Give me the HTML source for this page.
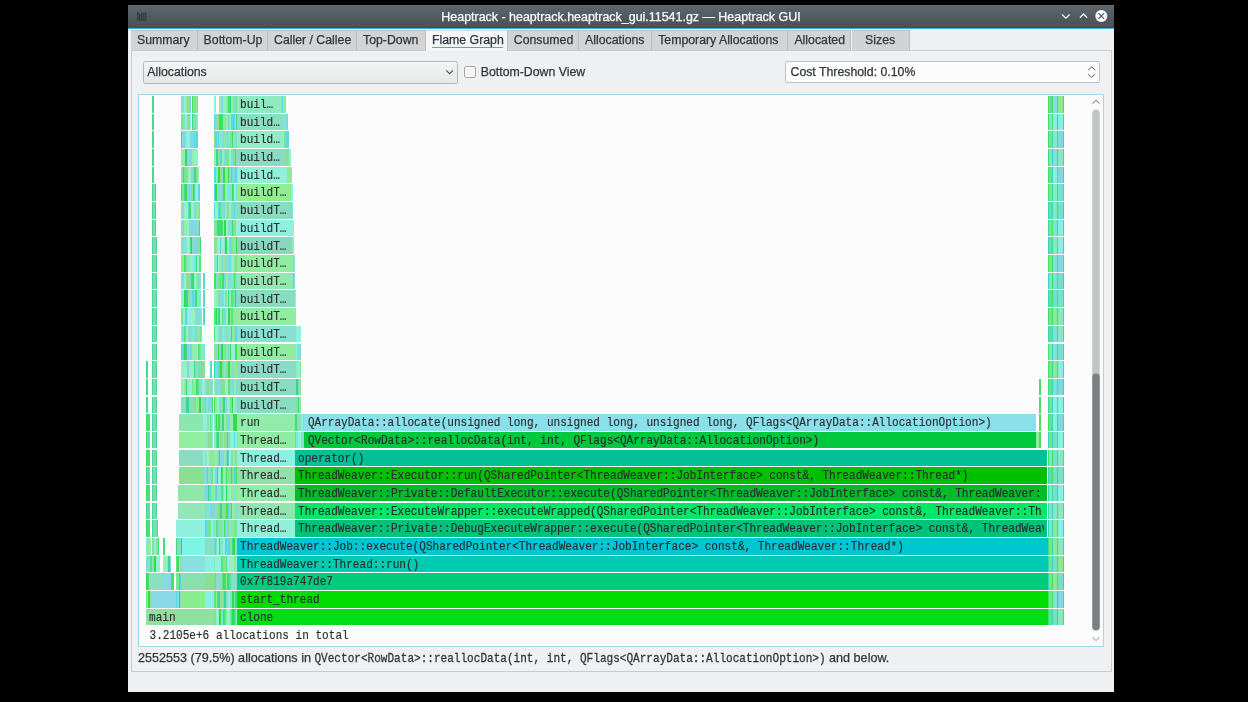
<!DOCTYPE html>
<html><head><meta charset="utf-8">
<style>
*{box-sizing:border-box}
html,body{margin:0;padding:0}
body{width:1248px;height:702px;background:#000;position:relative;overflow:hidden;font-family:"Liberation Sans",sans-serif;font-size:12.3px;color:#31363b;-webkit-text-stroke:0.25px currentColor}
.a{position:absolute}
#win{position:absolute;left:128px;top:5px;width:986.4px;height:687.3px;background:#eff0f1;will-change:transform}
#title{position:absolute;left:0;top:0;width:986px;height:23px;background:linear-gradient(#6a737a 0px,#5c656c 1.5px,#4a5157 21.5px,#404549 23px);color:#fcfcfc;text-align:center;line-height:25px;font-size:12.45px}
#tline{position:absolute;left:0;top:23px;width:986px;height:1px;background:#3daee9}
.tab{position:absolute;top:25px;height:20px;background:#d2d3d4;border-right:1px solid #bcbdbe;border-top:1px solid #c4c5c6;line-height:19px;padding-left:6px;white-space:nowrap;color:#31363b}
#panel{position:absolute;left:3px;top:44.5px;width:981px;height:622px;border:1px solid #c9cacb;background:#eff0f1}
#combo{position:absolute;left:15px;top:56px;width:315px;height:22.5px;border:1px solid #b6b7b8;border-radius:2.5px;background:linear-gradient(#f3f4f4,#e6e7e8);line-height:20px;padding-left:3.3px}
#chk{position:absolute;left:335.8px;top:61px;width:12.2px;height:11.8px;border:1px solid #a8a9aa;border-radius:2px;background:#f4f4f5}
#spin{position:absolute;left:657px;top:56px;width:314.6px;height:22.4px;border:1px solid #c0c1c2;border-radius:2px;background:#fcfcfc;line-height:20px;padding-left:4.5px}
#view{position:absolute;left:10.2px;top:88.8px;width:966.3px;height:553.2px;border:1px solid #a6d4ec;background:#fcfcfc;overflow:hidden}
#fg{position:absolute;left:0;top:0;width:1248px;height:702px;overflow:hidden;will-change:transform}
#fg div{position:absolute}
#fg .blk{overflow:hidden;white-space:pre}
.m,#fg .blk span{font-family:"Liberation Mono",monospace;font-size:11.07px;color:#2a2e32;white-space:pre;transform:scaleY(1.1);transform-origin:0 12px;-webkit-text-stroke:0.15px #2a2e32}
.m{position:absolute;line-height:16.5px;margin-top:1.1px}
#fg .blk span{position:absolute;left:3px;top:1.1px;line-height:16.5px}
</style></head><body>
<div id="win">
  <div id="title">Heaptrack - heaptrack.heaptrack_gui.11541.gz — Heaptrack GUI</div>
  <div id="tline"></div>
  <div class="tab" style="left:3px;width:66.6px">Summary</div>
  <div class="tab" style="left:69.6px;width:70.4px">Bottom-Up</div>
  <div class="tab" style="left:140px;width:89px">Caller / Callee</div>
  <div class="tab" style="left:229px;width:68.6px">Top-Down</div>
  <div class="tab" style="left:379.8px;width:71.2px">Consumed</div>
  <div class="tab" style="left:451px;width:73.2px">Allocations</div>
  <div class="tab" style="left:524.2px;width:136.2px">Temporary Allocations</div>
  <div class="tab" style="left:660.4px;width:63.1px">Allocated</div>
  <div class="tab" style="left:723.5px;width:58.3px;text-align:center;padding-left:0">Sizes</div>
  <div id="panel"></div>
  <div class="tab" style="left:298px;width:81.8px;background:#f5f5f5;border-top:1px solid #d8d9da;height:21px">Flame Graph</div>
  <div class="a" style="left:303.5px;top:42px;width:71.5px;height:1.3px;background:#3daee9"></div>
  <div id="combo">Allocations</div>
  <div id="chk"></div>
  <div class="a" style="left:352.8px;top:58.5px;line-height:16px">Bottom-Down View</div>
  <div id="spin">Cost Threshold: 0.10%</div>
  <div id="view"></div>
  <div class="a" style="left:10px;top:645px;line-height:16px;font-size:12.6px;white-space:pre">2552553 (79.5%) allocations in <span style="font-family:'Liberation Mono',monospace;font-size:11.07px;display:inline-block;transform:scaleY(1.1);transform-origin:0 12px">QVector&lt;RowData&gt;::reallocData(int, int, QFlags&lt;QArrayData::AllocationOption&gt;)</span> and below.</div>
</div>
<div id="fg">
<div style="left:152.00px;top:96.00px;width:2.00px;height:16.50px;background:#78dcb0;box-shadow:inset 1px 0 #48d890,inset -1px 0 #48d890;"></div>
<div style="left:181.00px;top:96.00px;width:3.00px;height:16.50px;background:#86dcd0;"></div>
<div style="left:184.00px;top:96.00px;width:2.00px;height:16.50px;background:#8ff0e0;"></div>
<div style="left:186.00px;top:96.00px;width:2.00px;height:16.50px;background:#8fe99b;"></div>
<div style="left:188.00px;top:96.00px;width:2.00px;height:16.50px;background:#88e090;"></div>
<div style="left:190.00px;top:96.00px;width:2.00px;height:16.50px;background:#80d8e4;"></div>
<div style="left:192.00px;top:96.00px;width:1.00px;height:16.50px;background:#40e060;"></div>
<div style="left:193.00px;top:96.00px;width:5.00px;height:16.50px;background:#88e090;"></div>
<div style="left:214.00px;top:96.00px;width:3.00px;height:16.50px;background:#8ff0e0;"></div>
<div style="left:217.00px;top:96.00px;width:1.00px;height:16.50px;background:#40e060;"></div>
<div style="left:218.00px;top:96.00px;width:1.00px;height:16.50px;background:#90eeb0;"></div>
<div style="left:219.00px;top:96.00px;width:2.00px;height:16.50px;background:#90eeb0;"></div>
<div style="left:221.00px;top:96.00px;width:2.00px;height:16.50px;background:#80d8e4;"></div>
<div style="left:223.00px;top:96.00px;width:2.00px;height:16.50px;background:#98f0c8;"></div>
<div style="left:225.00px;top:96.00px;width:1.00px;height:16.50px;background:#98f0c8;"></div>
<div style="left:226.00px;top:96.00px;width:2.00px;height:16.50px;background:#8fe99b;"></div>
<div style="left:228.00px;top:96.00px;width:1.00px;height:16.50px;background:#40e060;"></div>
<div style="left:229.00px;top:96.00px;width:2.00px;height:16.50px;background:#38d890;"></div>
<div style="left:231.00px;top:96.00px;width:2.00px;height:16.50px;background:#90eeb0;"></div>
<div style="left:233.00px;top:96.00px;width:2.00px;height:16.50px;background:#86dcd0;"></div>
<div style="left:235.00px;top:96.00px;width:2.00px;height:16.50px;background:#70ea90;"></div>
<div style="left:237.00px;top:96.00px;width:45.00px;height:16.50px;background:#8ee8c0;"></div>
<div style="left:282.00px;top:96.00px;width:1.00px;height:16.50px;background:#58d8e0;"></div>
<div style="left:283.00px;top:96.00px;width:1.00px;height:16.50px;background:#98f0c8;"></div>
<div style="left:284.00px;top:96.00px;width:2.00px;height:16.50px;background:#8fe99b;"></div>
<div style="left:191.00px;top:96.00px;width:1.00px;height:16.50px;background:#fcfcfc;"></div>
<div style="left:216.00px;top:96.00px;width:3.00px;height:16.50px;background:#fcfcfc;"></div>
<span class="m" style="left:240.00px;top:96.00px">buil…</span>
<div style="left:152.00px;top:113.68px;width:2.00px;height:16.50px;background:#78dcb0;box-shadow:inset 1px 0 #48d890,inset -1px 0 #48d890;"></div>
<div style="left:181.00px;top:113.68px;width:2.00px;height:16.50px;background:#70ea90;"></div>
<div style="left:183.00px;top:113.68px;width:2.00px;height:16.50px;background:#88dfc0;"></div>
<div style="left:185.00px;top:113.68px;width:2.00px;height:16.50px;background:#8ff0e0;"></div>
<div style="left:187.00px;top:113.68px;width:3.00px;height:16.50px;background:#88e090;"></div>
<div style="left:190.00px;top:113.68px;width:1.00px;height:16.50px;background:#8ff0e0;"></div>
<div style="left:191.00px;top:113.68px;width:2.00px;height:16.50px;background:#38d890;"></div>
<div style="left:193.00px;top:113.68px;width:3.00px;height:16.50px;background:#88e090;"></div>
<div style="left:196.00px;top:113.68px;width:1.00px;height:16.50px;background:#80e8d0;"></div>
<div style="left:197.00px;top:113.68px;width:1.00px;height:16.50px;background:#90eeb0;"></div>
<div style="left:214.00px;top:113.68px;width:1.00px;height:16.50px;background:#58d8e0;"></div>
<div style="left:215.00px;top:113.68px;width:2.00px;height:16.50px;background:#88dfc0;"></div>
<div style="left:217.00px;top:113.68px;width:2.00px;height:16.50px;background:#88e090;"></div>
<div style="left:219.00px;top:113.68px;width:1.00px;height:16.50px;background:#38d890;"></div>
<div style="left:220.00px;top:113.68px;width:2.00px;height:16.50px;background:#40e060;"></div>
<div style="left:222.00px;top:113.68px;width:1.00px;height:16.50px;background:#40e060;"></div>
<div style="left:223.00px;top:113.68px;width:3.00px;height:16.50px;background:#8fe99b;"></div>
<div style="left:226.00px;top:113.68px;width:2.00px;height:16.50px;background:#90eeb0;"></div>
<div style="left:228.00px;top:113.68px;width:2.00px;height:16.50px;background:#86dcd0;"></div>
<div style="left:230.00px;top:113.68px;width:1.00px;height:16.50px;background:#98f0c8;"></div>
<div style="left:231.00px;top:113.68px;width:2.00px;height:16.50px;background:#58d8e0;"></div>
<div style="left:233.00px;top:113.68px;width:1.00px;height:16.50px;background:#50e878;"></div>
<div style="left:234.00px;top:113.68px;width:1.00px;height:16.50px;background:#58d8e0;"></div>
<div style="left:235.00px;top:113.68px;width:1.00px;height:16.50px;background:#90eeb0;"></div>
<div style="left:236.00px;top:113.68px;width:1.00px;height:16.50px;background:#38d890;"></div>
<div style="left:237.00px;top:113.68px;width:46.00px;height:16.50px;background:#88e0c0;"></div>
<div style="left:283.00px;top:113.68px;width:3.00px;height:16.50px;background:#80e8d0;"></div>
<div style="left:286.00px;top:113.68px;width:2.00px;height:16.50px;background:#80d8e4;"></div>
<div style="left:191.00px;top:113.68px;width:1.00px;height:16.50px;background:#fcfcfc;"></div>
<span class="m" style="left:240.00px;top:113.68px">build…</span>
<div style="left:152.00px;top:131.36px;width:2.00px;height:16.50px;background:#78dcb0;box-shadow:inset 1px 0 #48d890,inset -1px 0 #48d890;"></div>
<div style="left:181.00px;top:131.36px;width:1.00px;height:16.50px;background:#40e060;"></div>
<div style="left:182.00px;top:131.36px;width:4.00px;height:16.50px;background:#80d8e4;"></div>
<div style="left:186.00px;top:131.36px;width:4.00px;height:16.50px;background:#8ff0e0;"></div>
<div style="left:190.00px;top:131.36px;width:4.00px;height:16.50px;background:#80d8e4;"></div>
<div style="left:194.00px;top:131.36px;width:1.00px;height:16.50px;background:#58d8e0;"></div>
<div style="left:195.00px;top:131.36px;width:1.00px;height:16.50px;background:#70ea90;"></div>
<div style="left:196.00px;top:131.36px;width:2.00px;height:16.50px;background:#58d8e0;"></div>
<div style="left:214.00px;top:131.36px;width:1.00px;height:16.50px;background:#88e090;"></div>
<div style="left:215.00px;top:131.36px;width:2.00px;height:16.50px;background:#58d8e0;"></div>
<div style="left:217.00px;top:131.36px;width:1.00px;height:16.50px;background:#86dcd0;"></div>
<div style="left:218.00px;top:131.36px;width:1.00px;height:16.50px;background:#58d8e0;"></div>
<div style="left:219.00px;top:131.36px;width:2.00px;height:16.50px;background:#80e8d0;"></div>
<div style="left:221.00px;top:131.36px;width:1.00px;height:16.50px;background:#90eeb0;"></div>
<div style="left:222.00px;top:131.36px;width:2.00px;height:16.50px;background:#86dcd0;"></div>
<div style="left:224.00px;top:131.36px;width:2.00px;height:16.50px;background:#8fe99b;"></div>
<div style="left:226.00px;top:131.36px;width:1.00px;height:16.50px;background:#80e8d0;"></div>
<div style="left:227.00px;top:131.36px;width:1.00px;height:16.50px;background:#70ea90;"></div>
<div style="left:228.00px;top:131.36px;width:2.00px;height:16.50px;background:#80e8d0;"></div>
<div style="left:230.00px;top:131.36px;width:2.00px;height:16.50px;background:#88e090;"></div>
<div style="left:232.00px;top:131.36px;width:1.00px;height:16.50px;background:#40e060;"></div>
<div style="left:233.00px;top:131.36px;width:2.00px;height:16.50px;background:#80e8d0;"></div>
<div style="left:235.00px;top:131.36px;width:2.00px;height:16.50px;background:#88dfc0;"></div>
<div style="left:237.00px;top:131.36px;width:47.00px;height:16.50px;background:#90ecc8;"></div>
<div style="left:284.00px;top:131.36px;width:2.00px;height:16.50px;background:#70ea90;"></div>
<div style="left:286.00px;top:131.36px;width:1.00px;height:16.50px;background:#58d8e0;"></div>
<div style="left:287.00px;top:131.36px;width:2.00px;height:16.50px;background:#58d8e0;"></div>
<span class="m" style="left:240.00px;top:131.36px">build…</span>
<div style="left:152.00px;top:149.04px;width:2.00px;height:16.50px;background:#78dcb0;box-shadow:inset 1px 0 #48d890,inset -1px 0 #48d890;"></div>
<div style="left:181.00px;top:149.04px;width:3.00px;height:16.50px;background:#90eeb0;"></div>
<div style="left:184.00px;top:149.04px;width:1.00px;height:16.50px;background:#90eeb0;"></div>
<div style="left:185.00px;top:149.04px;width:2.00px;height:16.50px;background:#30dd48;"></div>
<div style="left:187.00px;top:149.04px;width:1.00px;height:16.50px;background:#86dcd0;"></div>
<div style="left:188.00px;top:149.04px;width:4.00px;height:16.50px;background:#80d8e4;"></div>
<div style="left:192.00px;top:149.04px;width:2.00px;height:16.50px;background:#90eeb0;"></div>
<div style="left:194.00px;top:149.04px;width:4.00px;height:16.50px;background:#98f0c8;"></div>
<div style="left:214.00px;top:149.04px;width:2.00px;height:16.50px;background:#90eeb0;"></div>
<div style="left:216.00px;top:149.04px;width:2.00px;height:16.50px;background:#38d890;"></div>
<div style="left:218.00px;top:149.04px;width:2.00px;height:16.50px;background:#88e090;"></div>
<div style="left:220.00px;top:149.04px;width:2.00px;height:16.50px;background:#58d8e0;"></div>
<div style="left:222.00px;top:149.04px;width:2.00px;height:16.50px;background:#90eeb0;"></div>
<div style="left:224.00px;top:149.04px;width:2.00px;height:16.50px;background:#80d8e4;"></div>
<div style="left:226.00px;top:149.04px;width:1.00px;height:16.50px;background:#70ea90;"></div>
<div style="left:227.00px;top:149.04px;width:2.00px;height:16.50px;background:#70ea90;"></div>
<div style="left:229.00px;top:149.04px;width:2.00px;height:16.50px;background:#8ff0e0;"></div>
<div style="left:231.00px;top:149.04px;width:2.00px;height:16.50px;background:#86dcd0;"></div>
<div style="left:233.00px;top:149.04px;width:2.00px;height:16.50px;background:#70ea90;"></div>
<div style="left:235.00px;top:149.04px;width:1.00px;height:16.50px;background:#40e060;"></div>
<div style="left:236.00px;top:149.04px;width:1.00px;height:16.50px;background:#88dfc0;"></div>
<div style="left:237.00px;top:149.04px;width:49.00px;height:16.50px;background:#88dcc0;"></div>
<div style="left:286.00px;top:149.04px;width:3.00px;height:16.50px;background:#88e090;"></div>
<div style="left:289.00px;top:149.04px;width:2.00px;height:16.50px;background:#8ff0e0;"></div>
<span class="m" style="left:240.00px;top:149.04px">build…</span>
<div style="left:152.00px;top:166.72px;width:2.00px;height:16.50px;background:#78dcb0;box-shadow:inset 1px 0 #48d890,inset -1px 0 #48d890;"></div>
<div style="left:181.00px;top:166.72px;width:2.00px;height:16.50px;background:#88dfc0;"></div>
<div style="left:183.00px;top:166.72px;width:1.00px;height:16.50px;background:#40e060;"></div>
<div style="left:184.00px;top:166.72px;width:2.00px;height:16.50px;background:#70ea90;"></div>
<div style="left:186.00px;top:166.72px;width:2.00px;height:16.50px;background:#88e090;"></div>
<div style="left:188.00px;top:166.72px;width:3.00px;height:16.50px;background:#98f0c8;"></div>
<div style="left:191.00px;top:166.72px;width:3.00px;height:16.50px;background:#80d8e4;"></div>
<div style="left:194.00px;top:166.72px;width:2.00px;height:16.50px;background:#40e060;"></div>
<div style="left:196.00px;top:166.72px;width:2.00px;height:16.50px;background:#88e090;"></div>
<div style="left:198.00px;top:166.72px;width:1.00px;height:16.50px;background:#98f0c8;"></div>
<div style="left:214.00px;top:166.72px;width:2.00px;height:16.50px;background:#58d8e0;"></div>
<div style="left:216.00px;top:166.72px;width:2.00px;height:16.50px;background:#80e8d0;"></div>
<div style="left:218.00px;top:166.72px;width:2.00px;height:16.50px;background:#30dd48;"></div>
<div style="left:220.00px;top:166.72px;width:2.00px;height:16.50px;background:#88e090;"></div>
<div style="left:222.00px;top:166.72px;width:1.00px;height:16.50px;background:#86dcd0;"></div>
<div style="left:223.00px;top:166.72px;width:2.00px;height:16.50px;background:#30dd48;"></div>
<div style="left:225.00px;top:166.72px;width:3.00px;height:16.50px;background:#8fe99b;"></div>
<div style="left:228.00px;top:166.72px;width:1.00px;height:16.50px;background:#30dd48;"></div>
<div style="left:229.00px;top:166.72px;width:2.00px;height:16.50px;background:#86dcd0;"></div>
<div style="left:231.00px;top:166.72px;width:1.00px;height:16.50px;background:#50e878;"></div>
<div style="left:232.00px;top:166.72px;width:3.00px;height:16.50px;background:#80d8e4;"></div>
<div style="left:235.00px;top:166.72px;width:1.00px;height:16.50px;background:#58d8e0;"></div>
<div style="left:236.00px;top:166.72px;width:1.00px;height:16.50px;background:#58d8e0;"></div>
<div style="left:237.00px;top:166.72px;width:50.00px;height:16.50px;background:#90f0d8;"></div>
<div style="left:287.00px;top:166.72px;width:2.00px;height:16.50px;background:#8fe99b;"></div>
<div style="left:289.00px;top:166.72px;width:3.00px;height:16.50px;background:#8fe99b;"></div>
<span class="m" style="left:240.00px;top:166.72px">build…</span>
<div style="left:152.00px;top:184.40px;width:4.00px;height:16.50px;background:#78dcb0;box-shadow:inset 1px 0 #48d890,inset -1px 0 #48d890;"></div>
<div style="left:181.00px;top:184.40px;width:1.00px;height:16.50px;background:#38d890;"></div>
<div style="left:182.00px;top:184.40px;width:2.00px;height:16.50px;background:#88e090;"></div>
<div style="left:184.00px;top:184.40px;width:2.00px;height:16.50px;background:#38d890;"></div>
<div style="left:186.00px;top:184.40px;width:1.00px;height:16.50px;background:#30dd48;"></div>
<div style="left:187.00px;top:184.40px;width:4.00px;height:16.50px;background:#80d8e4;"></div>
<div style="left:191.00px;top:184.40px;width:2.00px;height:16.50px;background:#88e090;"></div>
<div style="left:193.00px;top:184.40px;width:1.00px;height:16.50px;background:#38d890;"></div>
<div style="left:194.00px;top:184.40px;width:1.00px;height:16.50px;background:#38d890;"></div>
<div style="left:195.00px;top:184.40px;width:3.00px;height:16.50px;background:#8ff0e0;"></div>
<div style="left:198.00px;top:184.40px;width:2.00px;height:16.50px;background:#58d8e0;"></div>
<div style="left:214.00px;top:184.40px;width:1.00px;height:16.50px;background:#58d8e0;"></div>
<div style="left:215.00px;top:184.40px;width:2.00px;height:16.50px;background:#30dd48;"></div>
<div style="left:217.00px;top:184.40px;width:1.00px;height:16.50px;background:#88dfc0;"></div>
<div style="left:218.00px;top:184.40px;width:3.00px;height:16.50px;background:#86dcd0;"></div>
<div style="left:221.00px;top:184.40px;width:2.00px;height:16.50px;background:#80d8e4;"></div>
<div style="left:223.00px;top:184.40px;width:2.00px;height:16.50px;background:#40e060;"></div>
<div style="left:225.00px;top:184.40px;width:2.00px;height:16.50px;background:#90eeb0;"></div>
<div style="left:227.00px;top:184.40px;width:3.00px;height:16.50px;background:#80e8d0;"></div>
<div style="left:230.00px;top:184.40px;width:2.00px;height:16.50px;background:#86dcd0;"></div>
<div style="left:232.00px;top:184.40px;width:2.00px;height:16.50px;background:#40e060;"></div>
<div style="left:234.00px;top:184.40px;width:2.00px;height:16.50px;background:#8ff0e0;"></div>
<div style="left:236.00px;top:184.40px;width:1.00px;height:16.50px;background:#86dcd0;"></div>
<div style="left:237.00px;top:184.40px;width:54.00px;height:16.50px;background:#90ee90;"></div>
<div style="left:291.00px;top:184.40px;width:2.00px;height:16.50px;background:#8ff0e0;"></div>
<span class="m" style="left:240.00px;top:184.40px">buildT…</span>
<div style="left:152.00px;top:202.08px;width:4.00px;height:16.50px;background:#78dcb0;box-shadow:inset 1px 0 #48d890,inset -1px 0 #48d890;"></div>
<div style="left:181.00px;top:202.08px;width:3.00px;height:16.50px;background:#88dfc0;"></div>
<div style="left:184.00px;top:202.08px;width:4.00px;height:16.50px;background:#98f0c8;"></div>
<div style="left:188.00px;top:202.08px;width:1.00px;height:16.50px;background:#58d8e0;"></div>
<div style="left:189.00px;top:202.08px;width:2.00px;height:16.50px;background:#40e060;"></div>
<div style="left:191.00px;top:202.08px;width:3.00px;height:16.50px;background:#98f0c8;"></div>
<div style="left:194.00px;top:202.08px;width:2.00px;height:16.50px;background:#80d8e4;"></div>
<div style="left:196.00px;top:202.08px;width:3.00px;height:16.50px;background:#8fe99b;"></div>
<div style="left:199.00px;top:202.08px;width:1.00px;height:16.50px;background:#70ea90;"></div>
<div style="left:214.00px;top:202.08px;width:1.00px;height:16.50px;background:#58d8e0;"></div>
<div style="left:215.00px;top:202.08px;width:3.00px;height:16.50px;background:#98f0c8;"></div>
<div style="left:218.00px;top:202.08px;width:1.00px;height:16.50px;background:#58d8e0;"></div>
<div style="left:219.00px;top:202.08px;width:2.00px;height:16.50px;background:#50e878;"></div>
<div style="left:221.00px;top:202.08px;width:1.00px;height:16.50px;background:#80d8e4;"></div>
<div style="left:222.00px;top:202.08px;width:3.00px;height:16.50px;background:#80d8e4;"></div>
<div style="left:225.00px;top:202.08px;width:2.00px;height:16.50px;background:#90eeb0;"></div>
<div style="left:227.00px;top:202.08px;width:2.00px;height:16.50px;background:#88e090;"></div>
<div style="left:229.00px;top:202.08px;width:2.00px;height:16.50px;background:#98f0c8;"></div>
<div style="left:231.00px;top:202.08px;width:2.00px;height:16.50px;background:#86dcd0;"></div>
<div style="left:233.00px;top:202.08px;width:1.00px;height:16.50px;background:#88dfc0;"></div>
<div style="left:234.00px;top:202.08px;width:1.00px;height:16.50px;background:#58d8e0;"></div>
<div style="left:235.00px;top:202.08px;width:2.00px;height:16.50px;background:#88dfc0;"></div>
<div style="left:237.00px;top:202.08px;width:54.00px;height:16.50px;background:#88dcc0;"></div>
<div style="left:291.00px;top:202.08px;width:2.00px;height:16.50px;background:#86dcd0;"></div>
<span class="m" style="left:240.00px;top:202.08px">buildT…</span>
<div style="left:152.00px;top:219.76px;width:4.00px;height:16.50px;background:#78dcb0;box-shadow:inset 1px 0 #48d890,inset -1px 0 #48d890;"></div>
<div style="left:181.00px;top:219.76px;width:2.00px;height:16.50px;background:#86dcd0;"></div>
<div style="left:183.00px;top:219.76px;width:1.00px;height:16.50px;background:#70ea90;"></div>
<div style="left:184.00px;top:219.76px;width:3.00px;height:16.50px;background:#90eeb0;"></div>
<div style="left:187.00px;top:219.76px;width:2.00px;height:16.50px;background:#98f0c8;"></div>
<div style="left:189.00px;top:219.76px;width:3.00px;height:16.50px;background:#80d8e4;"></div>
<div style="left:192.00px;top:219.76px;width:4.00px;height:16.50px;background:#80d8e4;"></div>
<div style="left:196.00px;top:219.76px;width:2.00px;height:16.50px;background:#88dfc0;"></div>
<div style="left:198.00px;top:219.76px;width:1.00px;height:16.50px;background:#86dcd0;"></div>
<div style="left:199.00px;top:219.76px;width:1.00px;height:16.50px;background:#38d890;"></div>
<div style="left:214.00px;top:219.76px;width:2.00px;height:16.50px;background:#88e090;"></div>
<div style="left:216.00px;top:219.76px;width:1.00px;height:16.50px;background:#70ea90;"></div>
<div style="left:217.00px;top:219.76px;width:1.00px;height:16.50px;background:#40e060;"></div>
<div style="left:218.00px;top:219.76px;width:1.00px;height:16.50px;background:#38d890;"></div>
<div style="left:219.00px;top:219.76px;width:2.00px;height:16.50px;background:#40e060;"></div>
<div style="left:221.00px;top:219.76px;width:2.00px;height:16.50px;background:#40e060;"></div>
<div style="left:223.00px;top:219.76px;width:1.00px;height:16.50px;background:#90eeb0;"></div>
<div style="left:224.00px;top:219.76px;width:2.00px;height:16.50px;background:#30dd48;"></div>
<div style="left:226.00px;top:219.76px;width:2.00px;height:16.50px;background:#98f0c8;"></div>
<div style="left:228.00px;top:219.76px;width:2.00px;height:16.50px;background:#86dcd0;"></div>
<div style="left:230.00px;top:219.76px;width:2.00px;height:16.50px;background:#88dfc0;"></div>
<div style="left:232.00px;top:219.76px;width:1.00px;height:16.50px;background:#38d890;"></div>
<div style="left:233.00px;top:219.76px;width:2.00px;height:16.50px;background:#88e090;"></div>
<div style="left:235.00px;top:219.76px;width:1.00px;height:16.50px;background:#88e090;"></div>
<div style="left:236.00px;top:219.76px;width:1.00px;height:16.50px;background:#98f0c8;"></div>
<div style="left:237.00px;top:219.76px;width:55.00px;height:16.50px;background:#90f0e0;"></div>
<div style="left:292.00px;top:219.76px;width:2.00px;height:16.50px;background:#98f0c8;"></div>
<span class="m" style="left:240.00px;top:219.76px">buildT…</span>
<div style="left:152.00px;top:237.44px;width:5.00px;height:16.50px;background:#78dcb0;box-shadow:inset 1px 0 #48d890,inset -1px 0 #48d890;"></div>
<div style="left:181.00px;top:237.44px;width:3.00px;height:16.50px;background:#88dfc0;"></div>
<div style="left:184.00px;top:237.44px;width:3.00px;height:16.50px;background:#80e8d0;"></div>
<div style="left:187.00px;top:237.44px;width:3.00px;height:16.50px;background:#8ff0e0;"></div>
<div style="left:190.00px;top:237.44px;width:1.00px;height:16.50px;background:#40e060;"></div>
<div style="left:191.00px;top:237.44px;width:1.00px;height:16.50px;background:#30dd48;"></div>
<div style="left:192.00px;top:237.44px;width:2.00px;height:16.50px;background:#88dfc0;"></div>
<div style="left:194.00px;top:237.44px;width:4.00px;height:16.50px;background:#80d8e4;"></div>
<div style="left:198.00px;top:237.44px;width:2.00px;height:16.50px;background:#88e090;"></div>
<div style="left:200.00px;top:237.44px;width:1.00px;height:16.50px;background:#38d890;"></div>
<div style="left:214.00px;top:237.44px;width:3.00px;height:16.50px;background:#88e090;"></div>
<div style="left:217.00px;top:237.44px;width:3.00px;height:16.50px;background:#98f0c8;"></div>
<div style="left:220.00px;top:237.44px;width:1.00px;height:16.50px;background:#58d8e0;"></div>
<div style="left:221.00px;top:237.44px;width:3.00px;height:16.50px;background:#98f0c8;"></div>
<div style="left:224.00px;top:237.44px;width:1.00px;height:16.50px;background:#80e8d0;"></div>
<div style="left:225.00px;top:237.44px;width:2.00px;height:16.50px;background:#30dd48;"></div>
<div style="left:227.00px;top:237.44px;width:2.00px;height:16.50px;background:#98f0c8;"></div>
<div style="left:229.00px;top:237.44px;width:1.00px;height:16.50px;background:#80d8e4;"></div>
<div style="left:230.00px;top:237.44px;width:1.00px;height:16.50px;background:#58d8e0;"></div>
<div style="left:231.00px;top:237.44px;width:2.00px;height:16.50px;background:#88e090;"></div>
<div style="left:233.00px;top:237.44px;width:3.00px;height:16.50px;background:#8fe99b;"></div>
<div style="left:236.00px;top:237.44px;width:1.00px;height:16.50px;background:#30dd48;"></div>
<div style="left:237.00px;top:237.44px;width:55.00px;height:16.50px;background:#88d8c0;"></div>
<div style="left:292.00px;top:237.44px;width:2.00px;height:16.50px;background:#90eeb0;"></div>
<span class="m" style="left:240.00px;top:237.44px">buildT…</span>
<div style="left:152.00px;top:255.12px;width:5.00px;height:16.50px;background:#78dcb0;box-shadow:inset 1px 0 #48d890,inset -1px 0 #48d890;"></div>
<div style="left:181.00px;top:255.12px;width:3.00px;height:16.50px;background:#8fe99b;"></div>
<div style="left:184.00px;top:255.12px;width:1.00px;height:16.50px;background:#40e060;"></div>
<div style="left:185.00px;top:255.12px;width:1.00px;height:16.50px;background:#50e878;"></div>
<div style="left:186.00px;top:255.12px;width:1.00px;height:16.50px;background:#88e090;"></div>
<div style="left:187.00px;top:255.12px;width:2.00px;height:16.50px;background:#80e8d0;"></div>
<div style="left:189.00px;top:255.12px;width:2.00px;height:16.50px;background:#90eeb0;"></div>
<div style="left:191.00px;top:255.12px;width:2.00px;height:16.50px;background:#8ff0e0;"></div>
<div style="left:193.00px;top:255.12px;width:3.00px;height:16.50px;background:#80e8d0;"></div>
<div style="left:196.00px;top:255.12px;width:1.00px;height:16.50px;background:#38d890;"></div>
<div style="left:197.00px;top:255.12px;width:2.00px;height:16.50px;background:#98f0c8;"></div>
<div style="left:199.00px;top:255.12px;width:1.00px;height:16.50px;background:#50e878;"></div>
<div style="left:200.00px;top:255.12px;width:1.00px;height:16.50px;background:#50e878;"></div>
<div style="left:214.00px;top:255.12px;width:1.00px;height:16.50px;background:#90eeb0;"></div>
<div style="left:215.00px;top:255.12px;width:2.00px;height:16.50px;background:#80e8d0;"></div>
<div style="left:217.00px;top:255.12px;width:1.00px;height:16.50px;background:#40e060;"></div>
<div style="left:218.00px;top:255.12px;width:2.00px;height:16.50px;background:#98f0c8;"></div>
<div style="left:220.00px;top:255.12px;width:2.00px;height:16.50px;background:#8fe99b;"></div>
<div style="left:222.00px;top:255.12px;width:1.00px;height:16.50px;background:#80d8e4;"></div>
<div style="left:223.00px;top:255.12px;width:2.00px;height:16.50px;background:#8fe99b;"></div>
<div style="left:225.00px;top:255.12px;width:3.00px;height:16.50px;background:#86dcd0;"></div>
<div style="left:228.00px;top:255.12px;width:2.00px;height:16.50px;background:#80d8e4;"></div>
<div style="left:230.00px;top:255.12px;width:1.00px;height:16.50px;background:#58d8e0;"></div>
<div style="left:231.00px;top:255.12px;width:3.00px;height:16.50px;background:#98f0c8;"></div>
<div style="left:234.00px;top:255.12px;width:3.00px;height:16.50px;background:#88e090;"></div>
<div style="left:237.00px;top:255.12px;width:56.00px;height:16.50px;background:#90eca0;"></div>
<div style="left:293.00px;top:255.12px;width:2.00px;height:16.50px;background:#86dcd0;"></div>
<span class="m" style="left:240.00px;top:255.12px">buildT…</span>
<div style="left:152.00px;top:272.80px;width:5.00px;height:16.50px;background:#78dcb0;box-shadow:inset 1px 0 #48d890,inset -1px 0 #48d890;"></div>
<div style="left:181.00px;top:272.80px;width:3.00px;height:16.50px;background:#86dcd0;"></div>
<div style="left:184.00px;top:272.80px;width:2.00px;height:16.50px;background:#8ff0e0;"></div>
<div style="left:186.00px;top:272.80px;width:4.00px;height:16.50px;background:#88e090;"></div>
<div style="left:190.00px;top:272.80px;width:1.00px;height:16.50px;background:#86dcd0;"></div>
<div style="left:191.00px;top:272.80px;width:2.00px;height:16.50px;background:#40e060;"></div>
<div style="left:193.00px;top:272.80px;width:1.00px;height:16.50px;background:#30dd48;"></div>
<div style="left:194.00px;top:272.80px;width:2.00px;height:16.50px;background:#8ff0e0;"></div>
<div style="left:196.00px;top:272.80px;width:1.00px;height:16.50px;background:#90eeb0;"></div>
<div style="left:197.00px;top:272.80px;width:4.00px;height:16.50px;background:#88dfc0;"></div>
<div style="left:203.00px;top:272.80px;width:2.00px;height:16.50px;background:#5ad8c8;"></div>
<div style="left:214.00px;top:272.80px;width:2.00px;height:16.50px;background:#40e060;"></div>
<div style="left:216.00px;top:272.80px;width:2.00px;height:16.50px;background:#88dfc0;"></div>
<div style="left:218.00px;top:272.80px;width:2.00px;height:16.50px;background:#70ea90;"></div>
<div style="left:220.00px;top:272.80px;width:1.00px;height:16.50px;background:#50e878;"></div>
<div style="left:221.00px;top:272.80px;width:1.00px;height:16.50px;background:#86dcd0;"></div>
<div style="left:222.00px;top:272.80px;width:2.00px;height:16.50px;background:#40e060;"></div>
<div style="left:224.00px;top:272.80px;width:2.00px;height:16.50px;background:#80d8e4;"></div>
<div style="left:226.00px;top:272.80px;width:2.00px;height:16.50px;background:#90eeb0;"></div>
<div style="left:228.00px;top:272.80px;width:3.00px;height:16.50px;background:#86dcd0;"></div>
<div style="left:231.00px;top:272.80px;width:2.00px;height:16.50px;background:#80e8d0;"></div>
<div style="left:233.00px;top:272.80px;width:1.00px;height:16.50px;background:#88dfc0;"></div>
<div style="left:234.00px;top:272.80px;width:1.00px;height:16.50px;background:#40e060;"></div>
<div style="left:235.00px;top:272.80px;width:2.00px;height:16.50px;background:#80d8e4;"></div>
<div style="left:237.00px;top:272.80px;width:56.00px;height:16.50px;background:#90eab0;"></div>
<div style="left:293.00px;top:272.80px;width:1.00px;height:16.50px;background:#58d8e0;"></div>
<div style="left:294.00px;top:272.80px;width:1.00px;height:16.50px;background:#80d8e4;"></div>
<span class="m" style="left:240.00px;top:272.80px">buildT…</span>
<div style="left:152.00px;top:290.48px;width:5.00px;height:16.50px;background:#78dcb0;box-shadow:inset 1px 0 #48d890,inset -1px 0 #48d890;"></div>
<div style="left:181.00px;top:290.48px;width:3.00px;height:16.50px;background:#8ff0e0;"></div>
<div style="left:184.00px;top:290.48px;width:2.00px;height:16.50px;background:#30dd48;"></div>
<div style="left:186.00px;top:290.48px;width:2.00px;height:16.50px;background:#38d890;"></div>
<div style="left:188.00px;top:290.48px;width:1.00px;height:16.50px;background:#88e090;"></div>
<div style="left:189.00px;top:290.48px;width:3.00px;height:16.50px;background:#86dcd0;"></div>
<div style="left:192.00px;top:290.48px;width:2.00px;height:16.50px;background:#58d8e0;"></div>
<div style="left:194.00px;top:290.48px;width:1.00px;height:16.50px;background:#80d8e4;"></div>
<div style="left:195.00px;top:290.48px;width:2.00px;height:16.50px;background:#40e060;"></div>
<div style="left:197.00px;top:290.48px;width:3.00px;height:16.50px;background:#80e8d0;"></div>
<div style="left:200.00px;top:290.48px;width:1.00px;height:16.50px;background:#80e8d0;"></div>
<div style="left:203.00px;top:290.48px;width:2.00px;height:16.50px;background:#5ad8c8;"></div>
<div style="left:214.00px;top:290.48px;width:2.00px;height:16.50px;background:#98f0c8;"></div>
<div style="left:216.00px;top:290.48px;width:2.00px;height:16.50px;background:#90eeb0;"></div>
<div style="left:218.00px;top:290.48px;width:1.00px;height:16.50px;background:#88e090;"></div>
<div style="left:219.00px;top:290.48px;width:2.00px;height:16.50px;background:#80d8e4;"></div>
<div style="left:221.00px;top:290.48px;width:2.00px;height:16.50px;background:#80d8e4;"></div>
<div style="left:223.00px;top:290.48px;width:1.00px;height:16.50px;background:#88dfc0;"></div>
<div style="left:224.00px;top:290.48px;width:1.00px;height:16.50px;background:#8ff0e0;"></div>
<div style="left:225.00px;top:290.48px;width:2.00px;height:16.50px;background:#88e090;"></div>
<div style="left:227.00px;top:290.48px;width:1.00px;height:16.50px;background:#98f0c8;"></div>
<div style="left:228.00px;top:290.48px;width:1.00px;height:16.50px;background:#38d890;"></div>
<div style="left:229.00px;top:290.48px;width:2.00px;height:16.50px;background:#90eeb0;"></div>
<div style="left:231.00px;top:290.48px;width:2.00px;height:16.50px;background:#50e878;"></div>
<div style="left:233.00px;top:290.48px;width:2.00px;height:16.50px;background:#70ea90;"></div>
<div style="left:235.00px;top:290.48px;width:1.00px;height:16.50px;background:#30dd48;"></div>
<div style="left:236.00px;top:290.48px;width:1.00px;height:16.50px;background:#80d8e4;"></div>
<div style="left:237.00px;top:290.48px;width:58.00px;height:16.50px;background:#88dcc0;"></div>
<div style="left:295.00px;top:290.48px;width:1.00px;height:16.50px;background:#8ff0e0;"></div>
<span class="m" style="left:240.00px;top:290.48px">buildT…</span>
<div style="left:152.00px;top:308.16px;width:5.00px;height:16.50px;background:#78dcb0;box-shadow:inset 1px 0 #48d890,inset -1px 0 #48d890;"></div>
<div style="left:181.00px;top:308.16px;width:2.00px;height:16.50px;background:#70ea90;"></div>
<div style="left:183.00px;top:308.16px;width:2.00px;height:16.50px;background:#98f0c8;"></div>
<div style="left:185.00px;top:308.16px;width:2.00px;height:16.50px;background:#58d8e0;"></div>
<div style="left:187.00px;top:308.16px;width:1.00px;height:16.50px;background:#90eeb0;"></div>
<div style="left:188.00px;top:308.16px;width:3.00px;height:16.50px;background:#8ff0e0;"></div>
<div style="left:191.00px;top:308.16px;width:4.00px;height:16.50px;background:#98f0c8;"></div>
<div style="left:195.00px;top:308.16px;width:3.00px;height:16.50px;background:#86dcd0;"></div>
<div style="left:198.00px;top:308.16px;width:2.00px;height:16.50px;background:#86dcd0;"></div>
<div style="left:200.00px;top:308.16px;width:2.00px;height:16.50px;background:#80e8d0;"></div>
<div style="left:203.00px;top:308.16px;width:2.00px;height:16.50px;background:#5ad8c8;"></div>
<div style="left:214.00px;top:308.16px;width:2.00px;height:16.50px;background:#50e878;"></div>
<div style="left:216.00px;top:308.16px;width:1.00px;height:16.50px;background:#30dd48;"></div>
<div style="left:217.00px;top:308.16px;width:1.00px;height:16.50px;background:#70ea90;"></div>
<div style="left:218.00px;top:308.16px;width:2.00px;height:16.50px;background:#38d890;"></div>
<div style="left:220.00px;top:308.16px;width:2.00px;height:16.50px;background:#98f0c8;"></div>
<div style="left:222.00px;top:308.16px;width:1.00px;height:16.50px;background:#50e878;"></div>
<div style="left:223.00px;top:308.16px;width:3.00px;height:16.50px;background:#80d8e4;"></div>
<div style="left:226.00px;top:308.16px;width:2.00px;height:16.50px;background:#98f0c8;"></div>
<div style="left:228.00px;top:308.16px;width:2.00px;height:16.50px;background:#30dd48;"></div>
<div style="left:230.00px;top:308.16px;width:1.00px;height:16.50px;background:#8fe99b;"></div>
<div style="left:231.00px;top:308.16px;width:2.00px;height:16.50px;background:#50e878;"></div>
<div style="left:233.00px;top:308.16px;width:3.00px;height:16.50px;background:#8fe99b;"></div>
<div style="left:236.00px;top:308.16px;width:1.00px;height:16.50px;background:#8fe99b;"></div>
<div style="left:237.00px;top:308.16px;width:59.00px;height:16.50px;background:#90eca0;"></div>
<span class="m" style="left:240.00px;top:308.16px">buildT…</span>
<div style="left:152.00px;top:325.84px;width:5.00px;height:16.50px;background:#78dcb0;box-shadow:inset 1px 0 #48d890,inset -1px 0 #48d890;"></div>
<div style="left:181.00px;top:325.84px;width:2.00px;height:16.50px;background:#80e8d0;"></div>
<div style="left:183.00px;top:325.84px;width:1.00px;height:16.50px;background:#80d8e4;"></div>
<div style="left:184.00px;top:325.84px;width:2.00px;height:16.50px;background:#50e878;"></div>
<div style="left:186.00px;top:325.84px;width:2.00px;height:16.50px;background:#8ff0e0;"></div>
<div style="left:188.00px;top:325.84px;width:3.00px;height:16.50px;background:#86dcd0;"></div>
<div style="left:191.00px;top:325.84px;width:1.00px;height:16.50px;background:#88dfc0;"></div>
<div style="left:192.00px;top:325.84px;width:3.00px;height:16.50px;background:#80e8d0;"></div>
<div style="left:195.00px;top:325.84px;width:1.00px;height:16.50px;background:#70ea90;"></div>
<div style="left:196.00px;top:325.84px;width:2.00px;height:16.50px;background:#86dcd0;"></div>
<div style="left:198.00px;top:325.84px;width:2.00px;height:16.50px;background:#8fe99b;"></div>
<div style="left:200.00px;top:325.84px;width:1.00px;height:16.50px;background:#70ea90;"></div>
<div style="left:201.00px;top:325.84px;width:1.00px;height:16.50px;background:#88dfc0;"></div>
<div style="left:214.00px;top:325.84px;width:1.00px;height:16.50px;background:#50e878;"></div>
<div style="left:215.00px;top:325.84px;width:3.00px;height:16.50px;background:#8ff0e0;"></div>
<div style="left:218.00px;top:325.84px;width:3.00px;height:16.50px;background:#88dfc0;"></div>
<div style="left:221.00px;top:325.84px;width:2.00px;height:16.50px;background:#86dcd0;"></div>
<div style="left:223.00px;top:325.84px;width:1.00px;height:16.50px;background:#8ff0e0;"></div>
<div style="left:224.00px;top:325.84px;width:2.00px;height:16.50px;background:#80e8d0;"></div>
<div style="left:226.00px;top:325.84px;width:2.00px;height:16.50px;background:#88dfc0;"></div>
<div style="left:228.00px;top:325.84px;width:3.00px;height:16.50px;background:#80e8d0;"></div>
<div style="left:231.00px;top:325.84px;width:1.00px;height:16.50px;background:#38d890;"></div>
<div style="left:232.00px;top:325.84px;width:3.00px;height:16.50px;background:#8fe99b;"></div>
<div style="left:235.00px;top:325.84px;width:2.00px;height:16.50px;background:#58d8e0;"></div>
<div style="left:237.00px;top:325.84px;width:59.00px;height:16.50px;background:#88e0d0;"></div>
<div style="left:296.00px;top:325.84px;width:2.00px;height:16.50px;background:#8ff0e0;"></div>
<div style="left:298.00px;top:325.84px;width:3.00px;height:16.50px;background:#8ff0e0;"></div>
<span class="m" style="left:240.00px;top:325.84px">buildT…</span>
<div style="left:152.00px;top:343.52px;width:5.00px;height:16.50px;background:#78dcb0;box-shadow:inset 1px 0 #48d890,inset -1px 0 #48d890;"></div>
<div style="left:181.00px;top:343.52px;width:1.00px;height:16.50px;background:#58d8e0;"></div>
<div style="left:182.00px;top:343.52px;width:2.00px;height:16.50px;background:#58d8e0;"></div>
<div style="left:184.00px;top:343.52px;width:1.00px;height:16.50px;background:#30dd48;"></div>
<div style="left:185.00px;top:343.52px;width:2.00px;height:16.50px;background:#38d890;"></div>
<div style="left:187.00px;top:343.52px;width:4.00px;height:16.50px;background:#80d8e4;"></div>
<div style="left:191.00px;top:343.52px;width:1.00px;height:16.50px;background:#70ea90;"></div>
<div style="left:192.00px;top:343.52px;width:4.00px;height:16.50px;background:#90eeb0;"></div>
<div style="left:196.00px;top:343.52px;width:2.00px;height:16.50px;background:#90eeb0;"></div>
<div style="left:198.00px;top:343.52px;width:2.00px;height:16.50px;background:#50e878;"></div>
<div style="left:200.00px;top:343.52px;width:1.00px;height:16.50px;background:#70ea90;"></div>
<div style="left:201.00px;top:343.52px;width:3.00px;height:16.50px;background:#80e8d0;"></div>
<div style="left:204.00px;top:343.52px;width:1.00px;height:16.50px;background:#80e8d0;"></div>
<div style="left:214.00px;top:343.52px;width:1.00px;height:16.50px;background:#88e090;"></div>
<div style="left:215.00px;top:343.52px;width:3.00px;height:16.50px;background:#86dcd0;"></div>
<div style="left:218.00px;top:343.52px;width:1.00px;height:16.50px;background:#30dd48;"></div>
<div style="left:219.00px;top:343.52px;width:2.00px;height:16.50px;background:#80d8e4;"></div>
<div style="left:221.00px;top:343.52px;width:2.00px;height:16.50px;background:#30dd48;"></div>
<div style="left:223.00px;top:343.52px;width:1.00px;height:16.50px;background:#70ea90;"></div>
<div style="left:224.00px;top:343.52px;width:2.00px;height:16.50px;background:#70ea90;"></div>
<div style="left:226.00px;top:343.52px;width:1.00px;height:16.50px;background:#90eeb0;"></div>
<div style="left:227.00px;top:343.52px;width:3.00px;height:16.50px;background:#86dcd0;"></div>
<div style="left:230.00px;top:343.52px;width:1.00px;height:16.50px;background:#40e060;"></div>
<div style="left:231.00px;top:343.52px;width:2.00px;height:16.50px;background:#8ff0e0;"></div>
<div style="left:233.00px;top:343.52px;width:2.00px;height:16.50px;background:#98f0c8;"></div>
<div style="left:235.00px;top:343.52px;width:2.00px;height:16.50px;background:#40e060;"></div>
<div style="left:237.00px;top:343.52px;width:59.00px;height:16.50px;background:#90eca0;"></div>
<div style="left:296.00px;top:343.52px;width:1.00px;height:16.50px;background:#8ff0e0;"></div>
<div style="left:297.00px;top:343.52px;width:2.00px;height:16.50px;background:#86dcd0;"></div>
<div style="left:299.00px;top:343.52px;width:2.00px;height:16.50px;background:#86dcd0;"></div>
<span class="m" style="left:240.00px;top:343.52px">buildT…</span>
<div style="left:146.00px;top:361.20px;width:2.00px;height:16.50px;background:#48d890;"></div>
<div style="left:152.00px;top:361.20px;width:5.00px;height:16.50px;background:#78dcb0;box-shadow:inset 1px 0 #48d890,inset -1px 0 #48d890;"></div>
<div style="left:181.00px;top:361.20px;width:3.00px;height:16.50px;background:#98f0c8;"></div>
<div style="left:184.00px;top:361.20px;width:3.00px;height:16.50px;background:#98f0c8;"></div>
<div style="left:187.00px;top:361.20px;width:2.00px;height:16.50px;background:#80d8e4;"></div>
<div style="left:189.00px;top:361.20px;width:1.00px;height:16.50px;background:#90eeb0;"></div>
<div style="left:190.00px;top:361.20px;width:4.00px;height:16.50px;background:#98f0c8;"></div>
<div style="left:194.00px;top:361.20px;width:1.00px;height:16.50px;background:#38d890;"></div>
<div style="left:195.00px;top:361.20px;width:3.00px;height:16.50px;background:#88dfc0;"></div>
<div style="left:198.00px;top:361.20px;width:2.00px;height:16.50px;background:#70ea90;"></div>
<div style="left:200.00px;top:361.20px;width:1.00px;height:16.50px;background:#86dcd0;"></div>
<div style="left:201.00px;top:361.20px;width:1.00px;height:16.50px;background:#58d8e0;"></div>
<div style="left:202.00px;top:361.20px;width:3.00px;height:16.50px;background:#88e090;"></div>
<div style="left:210.00px;top:361.20px;width:2.00px;height:16.50px;background:#5ad8c8;"></div>
<div style="left:214.00px;top:361.20px;width:1.00px;height:16.50px;background:#38d890;"></div>
<div style="left:215.00px;top:361.20px;width:2.00px;height:16.50px;background:#80d8e4;"></div>
<div style="left:217.00px;top:361.20px;width:1.00px;height:16.50px;background:#80d8e4;"></div>
<div style="left:218.00px;top:361.20px;width:2.00px;height:16.50px;background:#58d8e0;"></div>
<div style="left:220.00px;top:361.20px;width:2.00px;height:16.50px;background:#30dd48;"></div>
<div style="left:222.00px;top:361.20px;width:2.00px;height:16.50px;background:#88e090;"></div>
<div style="left:224.00px;top:361.20px;width:2.00px;height:16.50px;background:#80e8d0;"></div>
<div style="left:226.00px;top:361.20px;width:2.00px;height:16.50px;background:#88e090;"></div>
<div style="left:228.00px;top:361.20px;width:2.00px;height:16.50px;background:#30dd48;"></div>
<div style="left:230.00px;top:361.20px;width:2.00px;height:16.50px;background:#8fe99b;"></div>
<div style="left:232.00px;top:361.20px;width:2.00px;height:16.50px;background:#86dcd0;"></div>
<div style="left:234.00px;top:361.20px;width:3.00px;height:16.50px;background:#8fe99b;"></div>
<div style="left:237.00px;top:361.20px;width:59.00px;height:16.50px;background:#88dcc8;"></div>
<div style="left:296.00px;top:361.20px;width:2.00px;height:16.50px;background:#90eeb0;"></div>
<div style="left:298.00px;top:361.20px;width:2.00px;height:16.50px;background:#8ff0e0;"></div>
<div style="left:300.00px;top:361.20px;width:1.00px;height:16.50px;background:#70ea90;"></div>
<span class="m" style="left:240.00px;top:361.20px">buildT…</span>
<div style="left:146.00px;top:378.88px;width:2.00px;height:16.50px;background:#48d890;"></div>
<div style="left:152.00px;top:378.88px;width:5.00px;height:16.50px;background:#78dcb0;box-shadow:inset 1px 0 #48d890,inset -1px 0 #48d890;"></div>
<div style="left:181.00px;top:378.88px;width:1.00px;height:16.50px;background:#90eeb0;"></div>
<div style="left:182.00px;top:378.88px;width:2.00px;height:16.50px;background:#98f0c8;"></div>
<div style="left:184.00px;top:378.88px;width:2.00px;height:16.50px;background:#8fe99b;"></div>
<div style="left:186.00px;top:378.88px;width:1.00px;height:16.50px;background:#38d890;"></div>
<div style="left:187.00px;top:378.88px;width:2.00px;height:16.50px;background:#90eeb0;"></div>
<div style="left:189.00px;top:378.88px;width:3.00px;height:16.50px;background:#8ff0e0;"></div>
<div style="left:192.00px;top:378.88px;width:1.00px;height:16.50px;background:#70ea90;"></div>
<div style="left:193.00px;top:378.88px;width:3.00px;height:16.50px;background:#8fe99b;"></div>
<div style="left:196.00px;top:378.88px;width:2.00px;height:16.50px;background:#40e060;"></div>
<div style="left:198.00px;top:378.88px;width:1.00px;height:16.50px;background:#50e878;"></div>
<div style="left:199.00px;top:378.88px;width:3.00px;height:16.50px;background:#86dcd0;"></div>
<div style="left:202.00px;top:378.88px;width:3.00px;height:16.50px;background:#8ff0e0;"></div>
<div style="left:205.00px;top:378.88px;width:2.00px;height:16.50px;background:#88dfc0;"></div>
<div style="left:207.00px;top:378.88px;width:2.00px;height:16.50px;background:#88e090;"></div>
<div style="left:209.00px;top:378.88px;width:4.00px;height:16.50px;background:#86dcd0;"></div>
<div style="left:214.00px;top:378.88px;width:2.00px;height:16.50px;background:#8fe99b;"></div>
<div style="left:216.00px;top:378.88px;width:2.00px;height:16.50px;background:#88dfc0;"></div>
<div style="left:218.00px;top:378.88px;width:3.00px;height:16.50px;background:#86dcd0;"></div>
<div style="left:221.00px;top:378.88px;width:1.00px;height:16.50px;background:#70ea90;"></div>
<div style="left:222.00px;top:378.88px;width:3.00px;height:16.50px;background:#88e090;"></div>
<div style="left:225.00px;top:378.88px;width:3.00px;height:16.50px;background:#98f0c8;"></div>
<div style="left:228.00px;top:378.88px;width:2.00px;height:16.50px;background:#50e878;"></div>
<div style="left:230.00px;top:378.88px;width:2.00px;height:16.50px;background:#88dfc0;"></div>
<div style="left:232.00px;top:378.88px;width:2.00px;height:16.50px;background:#80d8e4;"></div>
<div style="left:234.00px;top:378.88px;width:1.00px;height:16.50px;background:#90eeb0;"></div>
<div style="left:235.00px;top:378.88px;width:1.00px;height:16.50px;background:#80e8d0;"></div>
<div style="left:236.00px;top:378.88px;width:1.00px;height:16.50px;background:#86dcd0;"></div>
<div style="left:237.00px;top:378.88px;width:59.00px;height:16.50px;background:#88dcc0;"></div>
<div style="left:296.00px;top:378.88px;width:1.00px;height:16.50px;background:#38d890;"></div>
<div style="left:297.00px;top:378.88px;width:1.00px;height:16.50px;background:#30dd48;"></div>
<div style="left:298.00px;top:378.88px;width:2.00px;height:16.50px;background:#88dfc0;"></div>
<div style="left:300.00px;top:378.88px;width:1.00px;height:16.50px;background:#88e090;"></div>
<span class="m" style="left:240.00px;top:378.88px">buildT…</span>
<div style="left:146.00px;top:396.56px;width:2.00px;height:16.50px;background:#48d890;"></div>
<div style="left:152.00px;top:396.56px;width:5.00px;height:16.50px;background:#78dcb0;box-shadow:inset 1px 0 #48d890,inset -1px 0 #48d890;"></div>
<div style="left:181.00px;top:396.56px;width:4.00px;height:16.50px;background:#88dfc0;"></div>
<div style="left:185.00px;top:396.56px;width:1.00px;height:16.50px;background:#88dfc0;"></div>
<div style="left:186.00px;top:396.56px;width:2.00px;height:16.50px;background:#38d890;"></div>
<div style="left:188.00px;top:396.56px;width:1.00px;height:16.50px;background:#38d890;"></div>
<div style="left:189.00px;top:396.56px;width:4.00px;height:16.50px;background:#88dfc0;"></div>
<div style="left:193.00px;top:396.56px;width:3.00px;height:16.50px;background:#88e090;"></div>
<div style="left:196.00px;top:396.56px;width:3.00px;height:16.50px;background:#8fe99b;"></div>
<div style="left:199.00px;top:396.56px;width:2.00px;height:16.50px;background:#30dd48;"></div>
<div style="left:201.00px;top:396.56px;width:1.00px;height:16.50px;background:#80e8d0;"></div>
<div style="left:202.00px;top:396.56px;width:3.00px;height:16.50px;background:#88dfc0;"></div>
<div style="left:205.00px;top:396.56px;width:1.00px;height:16.50px;background:#58d8e0;"></div>
<div style="left:206.00px;top:396.56px;width:2.00px;height:16.50px;background:#80e8d0;"></div>
<div style="left:208.00px;top:396.56px;width:4.00px;height:16.50px;background:#80d8e4;"></div>
<div style="left:212.00px;top:396.56px;width:1.00px;height:16.50px;background:#40e060;"></div>
<div style="left:214.00px;top:396.56px;width:1.00px;height:16.50px;background:#40e060;"></div>
<div style="left:215.00px;top:396.56px;width:2.00px;height:16.50px;background:#8fe99b;"></div>
<div style="left:217.00px;top:396.56px;width:2.00px;height:16.50px;background:#8ff0e0;"></div>
<div style="left:219.00px;top:396.56px;width:3.00px;height:16.50px;background:#86dcd0;"></div>
<div style="left:222.00px;top:396.56px;width:1.00px;height:16.50px;background:#70ea90;"></div>
<div style="left:223.00px;top:396.56px;width:2.00px;height:16.50px;background:#38d890;"></div>
<div style="left:225.00px;top:396.56px;width:1.00px;height:16.50px;background:#88dfc0;"></div>
<div style="left:226.00px;top:396.56px;width:1.00px;height:16.50px;background:#80d8e4;"></div>
<div style="left:227.00px;top:396.56px;width:2.00px;height:16.50px;background:#98f0c8;"></div>
<div style="left:229.00px;top:396.56px;width:1.00px;height:16.50px;background:#90eeb0;"></div>
<div style="left:230.00px;top:396.56px;width:2.00px;height:16.50px;background:#70ea90;"></div>
<div style="left:232.00px;top:396.56px;width:1.00px;height:16.50px;background:#30dd48;"></div>
<div style="left:233.00px;top:396.56px;width:2.00px;height:16.50px;background:#98f0c8;"></div>
<div style="left:235.00px;top:396.56px;width:2.00px;height:16.50px;background:#80e8d0;"></div>
<div style="left:237.00px;top:396.56px;width:59.00px;height:16.50px;background:#88dcc0;"></div>
<div style="left:296.00px;top:396.56px;width:2.00px;height:16.50px;background:#88e090;"></div>
<div style="left:298.00px;top:396.56px;width:1.00px;height:16.50px;background:#38d890;"></div>
<div style="left:299.00px;top:396.56px;width:2.00px;height:16.50px;background:#8fe99b;"></div>
<span class="m" style="left:240.00px;top:396.56px">buildT…</span>
<div style="left:146.00px;top:414.24px;width:4.00px;height:16.50px;background:#48e070;box-shadow:inset 1px 0 #40d870;"></div>
<div style="left:152.00px;top:414.24px;width:5.00px;height:16.50px;background:#78dcb0;box-shadow:inset 1px 0 #48d890,inset -1px 0 #48d890;"></div>
<div style="left:179.00px;top:414.24px;width:24.00px;height:16.50px;background:#88e8b0;"></div>
<div style="left:203.00px;top:414.24px;width:2.00px;height:16.50px;background:#8ff0e0;"></div>
<div style="left:205.00px;top:414.24px;width:2.00px;height:16.50px;background:#8ff0e0;"></div>
<div style="left:207.00px;top:414.24px;width:2.00px;height:16.50px;background:#88dfc0;"></div>
<div style="left:209.00px;top:414.24px;width:1.00px;height:16.50px;background:#98f0c8;"></div>
<div style="left:210.00px;top:414.24px;width:1.00px;height:16.50px;background:#50e878;"></div>
<div style="left:211.00px;top:414.24px;width:3.00px;height:16.50px;background:#80e8d0;"></div>
<div style="left:214.00px;top:414.24px;width:2.00px;height:16.50px;background:#86dcd0;"></div>
<div style="left:216.00px;top:414.24px;width:1.00px;height:16.50px;background:#30dd48;"></div>
<div style="left:217.00px;top:414.24px;width:1.00px;height:16.50px;background:#70ea90;"></div>
<div style="left:218.00px;top:414.24px;width:2.00px;height:16.50px;background:#40e060;"></div>
<div style="left:220.00px;top:414.24px;width:1.00px;height:16.50px;background:#88e090;"></div>
<div style="left:221.00px;top:414.24px;width:1.00px;height:16.50px;background:#88dfc0;"></div>
<div style="left:222.00px;top:414.24px;width:2.00px;height:16.50px;background:#38d890;"></div>
<div style="left:224.00px;top:414.24px;width:2.00px;height:16.50px;background:#90eeb0;"></div>
<div style="left:226.00px;top:414.24px;width:1.00px;height:16.50px;background:#88e090;"></div>
<div style="left:227.00px;top:414.24px;width:3.00px;height:16.50px;background:#80d8e4;"></div>
<div style="left:230.00px;top:414.24px;width:1.00px;height:16.50px;background:#90eeb0;"></div>
<div style="left:231.00px;top:414.24px;width:2.00px;height:16.50px;background:#90eeb0;"></div>
<div style="left:233.00px;top:414.24px;width:2.00px;height:16.50px;background:#30dd48;"></div>
<div style="left:235.00px;top:414.24px;width:2.00px;height:16.50px;background:#30dd48;"></div>
<div style="left:213.00px;top:414.24px;width:1.00px;height:16.50px;background:#fcfcfc;"></div>
<div style="left:237.00px;top:414.24px;width:58.00px;height:16.50px;background:#90eca8;"></div>
<span class="m" style="left:240.00px;top:414.24px">run</span>
<div style="left:295.00px;top:414.24px;width:2.00px;height:16.50px;background:#40e060;"></div>
<div style="left:297.00px;top:414.24px;width:1.00px;height:16.50px;background:#88dfc0;"></div>
<div style="left:298.00px;top:414.24px;width:3.00px;height:16.50px;background:#88dfc0;"></div>
<div style="left:301.00px;top:414.24px;width:2.00px;height:16.50px;background:#8ff0e0;"></div>
<div style="left:303.00px;top:414.24px;width:1.00px;height:16.50px;background:#88dfc0;"></div>
<div class="blk" style="left:304px;top:414.24px;width:732px;height:16.5px;background:#8ae0ea"><div style="left:0;top:0;width:729px;height:16.5px;overflow:hidden"><span style="left:3.9px">QArrayData::allocate(unsigned long, unsigned long, unsigned long, QFlags&lt;QArrayData::AllocationOption&gt;)</span></div></div>
<div style="left:146.00px;top:431.92px;width:4.00px;height:16.50px;background:#60d8c0;box-shadow:inset 1px 0 #40d870;"></div>
<div style="left:152.00px;top:431.92px;width:5.00px;height:16.50px;background:#78dcb0;box-shadow:inset 1px 0 #48d890,inset -1px 0 #48d890;"></div>
<div style="left:179.00px;top:431.92px;width:27.00px;height:16.50px;background:#90eea0;"></div>
<div style="left:206.00px;top:431.92px;width:2.00px;height:16.50px;background:#80e8d0;"></div>
<div style="left:208.00px;top:431.92px;width:3.00px;height:16.50px;background:#88e090;"></div>
<div style="left:211.00px;top:431.92px;width:3.00px;height:16.50px;background:#88dfc0;"></div>
<div style="left:214.00px;top:431.92px;width:2.00px;height:16.50px;background:#80e8d0;"></div>
<div style="left:216.00px;top:431.92px;width:1.00px;height:16.50px;background:#50e878;"></div>
<div style="left:217.00px;top:431.92px;width:2.00px;height:16.50px;background:#38d890;"></div>
<div style="left:219.00px;top:431.92px;width:1.00px;height:16.50px;background:#80d8e4;"></div>
<div style="left:220.00px;top:431.92px;width:3.00px;height:16.50px;background:#88e090;"></div>
<div style="left:223.00px;top:431.92px;width:1.00px;height:16.50px;background:#90eeb0;"></div>
<div style="left:224.00px;top:431.92px;width:3.00px;height:16.50px;background:#88e090;"></div>
<div style="left:227.00px;top:431.92px;width:1.00px;height:16.50px;background:#40e060;"></div>
<div style="left:228.00px;top:431.92px;width:2.00px;height:16.50px;background:#88dfc0;"></div>
<div style="left:230.00px;top:431.92px;width:1.00px;height:16.50px;background:#80e8d0;"></div>
<div style="left:231.00px;top:431.92px;width:3.00px;height:16.50px;background:#8ff0e0;"></div>
<div style="left:234.00px;top:431.92px;width:1.00px;height:16.50px;background:#58d8e0;"></div>
<div style="left:235.00px;top:431.92px;width:2.00px;height:16.50px;background:#8ff0e0;"></div>
<div style="left:213.00px;top:431.92px;width:1.00px;height:16.50px;background:#fcfcfc;"></div>
<div style="left:237.00px;top:431.92px;width:58.00px;height:16.50px;background:#90eca0;"></div>
<span class="m" style="left:240.00px;top:431.92px">Thread…</span>
<div style="left:295.00px;top:431.92px;width:1.00px;height:16.50px;background:#58d8e0;"></div>
<div style="left:296.00px;top:431.92px;width:2.00px;height:16.50px;background:#80e8d0;"></div>
<div style="left:298.00px;top:431.92px;width:3.00px;height:16.50px;background:#8ff0e0;"></div>
<div style="left:301.00px;top:431.92px;width:2.00px;height:16.50px;background:#86dcd0;"></div>
<div style="left:303.00px;top:431.92px;width:1.00px;height:16.50px;background:#8fe99b;"></div>
<div class="blk" style="left:304px;top:431.92px;width:732px;height:16.5px;background:#00c83c"><div style="left:0;top:0;width:729px;height:16.5px;overflow:hidden"><span style="left:3.9px">QVector&lt;RowData&gt;::reallocData(int, int, QFlags&lt;QArrayData::AllocationOption&gt;)</span></div></div>
<div style="left:1036.00px;top:431.92px;width:3.00px;height:16.50px;background:#90eca0;"></div>
<div style="left:146.00px;top:449.60px;width:4.00px;height:16.50px;background:#48e070;box-shadow:inset 1px 0 #40d870;"></div>
<div style="left:152.00px;top:449.60px;width:5.00px;height:16.50px;background:#78dcb0;box-shadow:inset 1px 0 #48d890,inset -1px 0 #48d890;"></div>
<div style="left:179.00px;top:449.60px;width:24.00px;height:16.50px;background:#88dcc0;"></div>
<div style="left:203.00px;top:449.60px;width:2.00px;height:16.50px;background:#8ff0e0;"></div>
<div style="left:205.00px;top:449.60px;width:1.00px;height:16.50px;background:#86dcd0;"></div>
<div style="left:206.00px;top:449.60px;width:3.00px;height:16.50px;background:#98f0c8;"></div>
<div style="left:209.00px;top:449.60px;width:1.00px;height:16.50px;background:#8fe99b;"></div>
<div style="left:210.00px;top:449.60px;width:3.00px;height:16.50px;background:#8fe99b;"></div>
<div style="left:213.00px;top:449.60px;width:2.00px;height:16.50px;background:#8fe99b;"></div>
<div style="left:215.00px;top:449.60px;width:2.00px;height:16.50px;background:#90eeb0;"></div>
<div style="left:217.00px;top:449.60px;width:2.00px;height:16.50px;background:#86dcd0;"></div>
<div style="left:219.00px;top:449.60px;width:1.00px;height:16.50px;background:#40e060;"></div>
<div style="left:220.00px;top:449.60px;width:2.00px;height:16.50px;background:#80d8e4;"></div>
<div style="left:222.00px;top:449.60px;width:2.00px;height:16.50px;background:#80d8e4;"></div>
<div style="left:224.00px;top:449.60px;width:1.00px;height:16.50px;background:#90eeb0;"></div>
<div style="left:225.00px;top:449.60px;width:2.00px;height:16.50px;background:#88dfc0;"></div>
<div style="left:227.00px;top:449.60px;width:1.00px;height:16.50px;background:#30dd48;"></div>
<div style="left:228.00px;top:449.60px;width:1.00px;height:16.50px;background:#58d8e0;"></div>
<div style="left:229.00px;top:449.60px;width:2.00px;height:16.50px;background:#8ff0e0;"></div>
<div style="left:231.00px;top:449.60px;width:2.00px;height:16.50px;background:#88e090;"></div>
<div style="left:233.00px;top:449.60px;width:2.00px;height:16.50px;background:#90eeb0;"></div>
<div style="left:235.00px;top:449.60px;width:2.00px;height:16.50px;background:#88e090;"></div>
<div style="left:237.00px;top:449.60px;width:58.00px;height:16.50px;background:#90f0e0;"></div>
<span class="m" style="left:240.00px;top:449.60px">Thread…</span>
<div class="blk" style="left:295px;top:449.60px;width:752px;height:16.5px;background:#00c096"><div style="left:0;top:0;width:749px;height:16.5px;overflow:hidden"><span style="left:3px">operator()</span></div></div>
<div style="left:146.00px;top:467.28px;width:4.00px;height:16.50px;background:#60d8c0;box-shadow:inset 1px 0 #40d870;"></div>
<div style="left:152.00px;top:467.28px;width:5.00px;height:16.50px;background:#78dcb0;box-shadow:inset 1px 0 #48d890,inset -1px 0 #48d890;"></div>
<div style="left:179.00px;top:467.28px;width:24.00px;height:16.50px;background:#88e090;"></div>
<div style="left:203.00px;top:467.28px;width:2.00px;height:16.50px;background:#80d8e4;"></div>
<div style="left:205.00px;top:467.28px;width:2.00px;height:16.50px;background:#86dcd0;"></div>
<div style="left:207.00px;top:467.28px;width:1.00px;height:16.50px;background:#50e878;"></div>
<div style="left:208.00px;top:467.28px;width:3.00px;height:16.50px;background:#88dfc0;"></div>
<div style="left:211.00px;top:467.28px;width:1.00px;height:16.50px;background:#70ea90;"></div>
<div style="left:212.00px;top:467.28px;width:1.00px;height:16.50px;background:#50e878;"></div>
<div style="left:213.00px;top:467.28px;width:2.00px;height:16.50px;background:#8ff0e0;"></div>
<div style="left:215.00px;top:467.28px;width:2.00px;height:16.50px;background:#80d8e4;"></div>
<div style="left:217.00px;top:467.28px;width:1.00px;height:16.50px;background:#38d890;"></div>
<div style="left:218.00px;top:467.28px;width:3.00px;height:16.50px;background:#8ff0e0;"></div>
<div style="left:221.00px;top:467.28px;width:1.00px;height:16.50px;background:#30dd48;"></div>
<div style="left:222.00px;top:467.28px;width:1.00px;height:16.50px;background:#40e060;"></div>
<div style="left:223.00px;top:467.28px;width:2.00px;height:16.50px;background:#90eeb0;"></div>
<div style="left:225.00px;top:467.28px;width:1.00px;height:16.50px;background:#80e8d0;"></div>
<div style="left:226.00px;top:467.28px;width:1.00px;height:16.50px;background:#40e060;"></div>
<div style="left:227.00px;top:467.28px;width:3.00px;height:16.50px;background:#88e090;"></div>
<div style="left:230.00px;top:467.28px;width:1.00px;height:16.50px;background:#70ea90;"></div>
<div style="left:231.00px;top:467.28px;width:1.00px;height:16.50px;background:#38d890;"></div>
<div style="left:232.00px;top:467.28px;width:2.00px;height:16.50px;background:#88e090;"></div>
<div style="left:234.00px;top:467.28px;width:2.00px;height:16.50px;background:#58d8e0;"></div>
<div style="left:236.00px;top:467.28px;width:1.00px;height:16.50px;background:#40e060;"></div>
<div style="left:237.00px;top:467.28px;width:58.00px;height:16.50px;background:#90e0a8;"></div>
<span class="m" style="left:240.00px;top:467.28px">Thread…</span>
<div class="blk" style="left:295px;top:467.28px;width:752px;height:16.5px;background:#00c000"><div style="left:0;top:0;width:749px;height:16.5px;overflow:hidden"><span style="left:3px">ThreadWeaver::Executor::run(QSharedPointer&lt;ThreadWeaver::JobInterface&gt; const&amp;, ThreadWeaver::Thread*)</span></div></div>
<div style="left:146.00px;top:484.96px;width:4.00px;height:16.50px;background:#48e070;box-shadow:inset 1px 0 #40d870;"></div>
<div style="left:152.00px;top:484.96px;width:5.00px;height:16.50px;background:#78dcb0;box-shadow:inset 1px 0 #48d890,inset -1px 0 #48d890;"></div>
<div style="left:178.00px;top:484.96px;width:26.00px;height:16.50px;background:#90e8a8;"></div>
<div style="left:204.00px;top:484.96px;width:1.00px;height:16.50px;background:#86dcd0;"></div>
<div style="left:205.00px;top:484.96px;width:3.00px;height:16.50px;background:#80d8e4;"></div>
<div style="left:208.00px;top:484.96px;width:1.00px;height:16.50px;background:#38d890;"></div>
<div style="left:209.00px;top:484.96px;width:2.00px;height:16.50px;background:#58d8e0;"></div>
<div style="left:211.00px;top:484.96px;width:3.00px;height:16.50px;background:#8fe99b;"></div>
<div style="left:214.00px;top:484.96px;width:1.00px;height:16.50px;background:#90eeb0;"></div>
<div style="left:215.00px;top:484.96px;width:2.00px;height:16.50px;background:#58d8e0;"></div>
<div style="left:217.00px;top:484.96px;width:1.00px;height:16.50px;background:#88dfc0;"></div>
<div style="left:218.00px;top:484.96px;width:3.00px;height:16.50px;background:#80e8d0;"></div>
<div style="left:221.00px;top:484.96px;width:2.00px;height:16.50px;background:#50e878;"></div>
<div style="left:223.00px;top:484.96px;width:1.00px;height:16.50px;background:#86dcd0;"></div>
<div style="left:224.00px;top:484.96px;width:2.00px;height:16.50px;background:#8ff0e0;"></div>
<div style="left:226.00px;top:484.96px;width:1.00px;height:16.50px;background:#30dd48;"></div>
<div style="left:227.00px;top:484.96px;width:2.00px;height:16.50px;background:#8fe99b;"></div>
<div style="left:229.00px;top:484.96px;width:2.00px;height:16.50px;background:#98f0c8;"></div>
<div style="left:231.00px;top:484.96px;width:2.00px;height:16.50px;background:#8fe99b;"></div>
<div style="left:233.00px;top:484.96px;width:3.00px;height:16.50px;background:#80e8d0;"></div>
<div style="left:236.00px;top:484.96px;width:1.00px;height:16.50px;background:#8fe99b;"></div>
<div style="left:237.00px;top:484.96px;width:58.00px;height:16.50px;background:#90eca8;"></div>
<span class="m" style="left:240.00px;top:484.96px">Thread…</span>
<div class="blk" style="left:295px;top:484.96px;width:752px;height:16.5px;background:#00bc28"><div style="left:0;top:0;width:749px;height:16.5px;overflow:hidden"><span style="left:3px">ThreadWeaver::Private::DefaultExecutor::execute(QSharedPointer&lt;ThreadWeaver::JobInterface&gt; const&amp;, ThreadWeaver:</span></div></div>
<div style="left:146.00px;top:502.64px;width:4.00px;height:16.50px;background:#60d8c0;box-shadow:inset 1px 0 #40d870;"></div>
<div style="left:152.00px;top:502.64px;width:5.00px;height:16.50px;background:#78dcb0;box-shadow:inset 1px 0 #48d890,inset -1px 0 #48d890;"></div>
<div style="left:178.00px;top:502.64px;width:27.00px;height:16.50px;background:#90e8b8;"></div>
<div style="left:205.00px;top:502.64px;width:2.00px;height:16.50px;background:#88dfc0;"></div>
<div style="left:207.00px;top:502.64px;width:3.00px;height:16.50px;background:#80e8d0;"></div>
<div style="left:210.00px;top:502.64px;width:3.00px;height:16.50px;background:#80d8e4;"></div>
<div style="left:213.00px;top:502.64px;width:2.00px;height:16.50px;background:#80d8e4;"></div>
<div style="left:215.00px;top:502.64px;width:2.00px;height:16.50px;background:#8fe99b;"></div>
<div style="left:217.00px;top:502.64px;width:2.00px;height:16.50px;background:#88e090;"></div>
<div style="left:219.00px;top:502.64px;width:1.00px;height:16.50px;background:#58d8e0;"></div>
<div style="left:220.00px;top:502.64px;width:2.00px;height:16.50px;background:#38d890;"></div>
<div style="left:222.00px;top:502.64px;width:3.00px;height:16.50px;background:#88e090;"></div>
<div style="left:225.00px;top:502.64px;width:1.00px;height:16.50px;background:#70ea90;"></div>
<div style="left:226.00px;top:502.64px;width:2.00px;height:16.50px;background:#40e060;"></div>
<div style="left:228.00px;top:502.64px;width:1.00px;height:16.50px;background:#58d8e0;"></div>
<div style="left:229.00px;top:502.64px;width:2.00px;height:16.50px;background:#88e090;"></div>
<div style="left:231.00px;top:502.64px;width:1.00px;height:16.50px;background:#38d890;"></div>
<div style="left:232.00px;top:502.64px;width:1.00px;height:16.50px;background:#90eeb0;"></div>
<div style="left:233.00px;top:502.64px;width:2.00px;height:16.50px;background:#90eeb0;"></div>
<div style="left:235.00px;top:502.64px;width:2.00px;height:16.50px;background:#86dcd0;"></div>
<div style="left:237.00px;top:502.64px;width:58.00px;height:16.50px;background:#90e6b0;"></div>
<span class="m" style="left:240.00px;top:502.64px">Thread…</span>
<div class="blk" style="left:295px;top:502.64px;width:752px;height:16.5px;background:#00e868"><div style="left:0;top:0;width:749px;height:16.5px;overflow:hidden"><span style="left:3px">ThreadWeaver::ExecuteWrapper::executeWrapped(QSharedPointer&lt;ThreadWeaver::JobInterface&gt; const&amp;, ThreadWeaver::Th</span></div></div>
<div style="left:146.00px;top:520.32px;width:4.00px;height:16.50px;background:#48e070;box-shadow:inset 1px 0 #40d870;"></div>
<div style="left:152.00px;top:520.32px;width:6.00px;height:16.50px;background:#78dcb0;box-shadow:inset 1px 0 #48d890,inset -1px 0 #48d890;"></div>
<div style="left:176.00px;top:520.32px;width:29.00px;height:16.50px;background:#90f0e0;"></div>
<div style="left:205.00px;top:520.32px;width:2.00px;height:16.50px;background:#58d8e0;"></div>
<div style="left:207.00px;top:520.32px;width:1.00px;height:16.50px;background:#80d8e4;"></div>
<div style="left:208.00px;top:520.32px;width:2.00px;height:16.50px;background:#70ea90;"></div>
<div style="left:210.00px;top:520.32px;width:1.00px;height:16.50px;background:#70ea90;"></div>
<div style="left:211.00px;top:520.32px;width:2.00px;height:16.50px;background:#8ff0e0;"></div>
<div style="left:213.00px;top:520.32px;width:3.00px;height:16.50px;background:#80e8d0;"></div>
<div style="left:216.00px;top:520.32px;width:2.00px;height:16.50px;background:#50e878;"></div>
<div style="left:218.00px;top:520.32px;width:2.00px;height:16.50px;background:#86dcd0;"></div>
<div style="left:220.00px;top:520.32px;width:2.00px;height:16.50px;background:#88e090;"></div>
<div style="left:222.00px;top:520.32px;width:2.00px;height:16.50px;background:#80e8d0;"></div>
<div style="left:224.00px;top:520.32px;width:1.00px;height:16.50px;background:#40e060;"></div>
<div style="left:225.00px;top:520.32px;width:1.00px;height:16.50px;background:#88e090;"></div>
<div style="left:226.00px;top:520.32px;width:1.00px;height:16.50px;background:#80d8e4;"></div>
<div style="left:227.00px;top:520.32px;width:2.00px;height:16.50px;background:#88e090;"></div>
<div style="left:229.00px;top:520.32px;width:3.00px;height:16.50px;background:#80e8d0;"></div>
<div style="left:232.00px;top:520.32px;width:2.00px;height:16.50px;background:#8fe99b;"></div>
<div style="left:234.00px;top:520.32px;width:2.00px;height:16.50px;background:#70ea90;"></div>
<div style="left:236.00px;top:520.32px;width:1.00px;height:16.50px;background:#70ea90;"></div>
<div style="left:237.00px;top:520.32px;width:58.00px;height:16.50px;background:#90f0d8;"></div>
<span class="m" style="left:240.00px;top:520.32px">Thread…</span>
<div class="blk" style="left:295px;top:520.32px;width:752px;height:16.5px;background:#00c278"><div style="left:0;top:0;width:749px;height:16.5px;overflow:hidden"><span style="left:3px">ThreadWeaver::Private::DebugExecuteWrapper::execute(QSharedPointer&lt;ThreadWeaver::JobInterface&gt; const&amp;, ThreadWeaver::Thread*)</span></div></div>
<div style="left:146.00px;top:538.00px;width:2.00px;height:16.50px;background:#80e8d0;"></div>
<div style="left:148.00px;top:538.00px;width:1.00px;height:16.50px;background:#8fe99b;"></div>
<div style="left:149.00px;top:538.00px;width:2.00px;height:16.50px;background:#90eeb0;"></div>
<div style="left:152.00px;top:538.00px;width:2.00px;height:16.50px;background:#88e090;"></div>
<div style="left:154.00px;top:538.00px;width:2.00px;height:16.50px;background:#98f0c8;"></div>
<div style="left:156.00px;top:538.00px;width:2.00px;height:16.50px;background:#88dfc0;"></div>
<div style="left:158.00px;top:538.00px;width:1.00px;height:16.50px;background:#40e060;"></div>
<div style="left:163.00px;top:538.00px;width:2.00px;height:16.50px;background:#40e070;"></div>
<div style="left:176.00px;top:538.00px;width:1.00px;height:16.50px;background:#38d890;"></div>
<div style="left:177.00px;top:538.00px;width:2.00px;height:16.50px;background:#88e090;"></div>
<div style="left:179.00px;top:538.00px;width:2.00px;height:16.50px;background:#80d8e4;"></div>
<div style="left:181.00px;top:538.00px;width:1.00px;height:16.50px;background:#30dd48;"></div>
<div style="left:182.00px;top:538.00px;width:23.00px;height:16.50px;background:#80f4e4;"></div>
<div style="left:205.00px;top:538.00px;width:8.00px;height:16.50px;background:#88e0c0;"></div>
<div style="left:213.00px;top:538.00px;width:1.00px;height:16.50px;background:#8fe99b;"></div>
<div style="left:214.00px;top:538.00px;width:2.00px;height:16.50px;background:#58d8e0;"></div>
<div style="left:216.00px;top:538.00px;width:1.00px;height:16.50px;background:#88dfc0;"></div>
<div style="left:217.00px;top:538.00px;width:2.00px;height:16.50px;background:#98f0c8;"></div>
<div style="left:219.00px;top:538.00px;width:1.00px;height:16.50px;background:#38d890;"></div>
<div style="left:220.00px;top:538.00px;width:3.00px;height:16.50px;background:#80e8d0;"></div>
<div style="left:223.00px;top:538.00px;width:2.00px;height:16.50px;background:#8ff0e0;"></div>
<div style="left:225.00px;top:538.00px;width:2.00px;height:16.50px;background:#58d8e0;"></div>
<div style="left:227.00px;top:538.00px;width:1.00px;height:16.50px;background:#88e090;"></div>
<div style="left:228.00px;top:538.00px;width:2.00px;height:16.50px;background:#58d8e0;"></div>
<div style="left:230.00px;top:538.00px;width:1.00px;height:16.50px;background:#88e090;"></div>
<div style="left:231.00px;top:538.00px;width:1.00px;height:16.50px;background:#88dfc0;"></div>
<div style="left:232.00px;top:538.00px;width:1.00px;height:16.50px;background:#38d890;"></div>
<div style="left:233.00px;top:538.00px;width:2.00px;height:16.50px;background:#30dd48;"></div>
<div style="left:235.00px;top:538.00px;width:2.00px;height:16.50px;background:#88dfc0;"></div>
<div class="blk" style="left:237px;top:538.00px;width:811px;height:16.5px;background:#00c6d2"><div style="left:0;top:0;width:808px;height:16.5px;overflow:hidden"><span style="left:3px">ThreadWeaver::Job::execute(QSharedPointer&lt;ThreadWeaver::JobInterface&gt; const&amp;, ThreadWeaver::Thread*)</span></div></div>
<div style="left:146.00px;top:555.68px;width:3.00px;height:16.50px;background:#86dcd0;"></div>
<div style="left:149.00px;top:555.68px;width:1.00px;height:16.50px;background:#8fe99b;"></div>
<div style="left:150.00px;top:555.68px;width:2.00px;height:16.50px;background:#50e878;"></div>
<div style="left:152.00px;top:555.68px;width:2.00px;height:16.50px;background:#86dcd0;"></div>
<div style="left:154.00px;top:555.68px;width:2.00px;height:16.50px;background:#30dd48;"></div>
<div style="left:156.00px;top:555.68px;width:2.00px;height:16.50px;background:#8ff0e0;"></div>
<div style="left:158.00px;top:555.68px;width:2.00px;height:16.50px;background:#98f0c8;"></div>
<div style="left:163.00px;top:555.68px;width:1.00px;height:16.50px;background:#98f0c8;"></div>
<div style="left:164.00px;top:555.68px;width:2.00px;height:16.50px;background:#98f0c8;"></div>
<div style="left:166.00px;top:555.68px;width:2.00px;height:16.50px;background:#90eeb0;"></div>
<div style="left:168.00px;top:555.68px;width:2.00px;height:16.50px;background:#38d890;"></div>
<div style="left:170.00px;top:555.68px;width:1.00px;height:16.50px;background:#80d8e4;"></div>
<div style="left:176.00px;top:555.68px;width:1.00px;height:16.50px;background:#50e878;"></div>
<div style="left:177.00px;top:555.68px;width:2.00px;height:16.50px;background:#40e060;"></div>
<div style="left:179.00px;top:555.68px;width:2.00px;height:16.50px;background:#8fe99b;"></div>
<div style="left:181.00px;top:555.68px;width:1.00px;height:16.50px;background:#88dfc0;"></div>
<div style="left:182.00px;top:555.68px;width:23.00px;height:16.50px;background:#88e0e0;"></div>
<div style="left:205.00px;top:555.68px;width:9.00px;height:16.50px;background:#88f0e0;"></div>
<div style="left:214.00px;top:555.68px;width:1.00px;height:16.50px;background:#80e8d0;"></div>
<div style="left:215.00px;top:555.68px;width:3.00px;height:16.50px;background:#98f0c8;"></div>
<div style="left:218.00px;top:555.68px;width:3.00px;height:16.50px;background:#8ff0e0;"></div>
<div style="left:221.00px;top:555.68px;width:2.00px;height:16.50px;background:#50e878;"></div>
<div style="left:223.00px;top:555.68px;width:2.00px;height:16.50px;background:#88e090;"></div>
<div style="left:225.00px;top:555.68px;width:1.00px;height:16.50px;background:#86dcd0;"></div>
<div style="left:226.00px;top:555.68px;width:1.00px;height:16.50px;background:#50e878;"></div>
<div style="left:227.00px;top:555.68px;width:3.00px;height:16.50px;background:#8ff0e0;"></div>
<div style="left:230.00px;top:555.68px;width:3.00px;height:16.50px;background:#98f0c8;"></div>
<div style="left:233.00px;top:555.68px;width:1.00px;height:16.50px;background:#8ff0e0;"></div>
<div style="left:234.00px;top:555.68px;width:2.00px;height:16.50px;background:#8fe99b;"></div>
<div style="left:236.00px;top:555.68px;width:1.00px;height:16.50px;background:#8ff0e0;"></div>
<div class="blk" style="left:237px;top:555.68px;width:811px;height:16.5px;background:#00cbb0"><div style="left:0;top:0;width:808px;height:16.5px;overflow:hidden"><span style="left:3px">ThreadWeaver::Thread::run()</span></div></div>
<div style="left:146.00px;top:573.36px;width:1.00px;height:16.50px;background:#30dd48;"></div>
<div style="left:147.00px;top:573.36px;width:2.00px;height:16.50px;background:#40e060;"></div>
<div style="left:149.00px;top:573.36px;width:1.00px;height:16.50px;background:#86dcd0;"></div>
<div style="left:150.00px;top:573.36px;width:13.00px;height:16.50px;background:#88e0c0;"></div>
<div style="left:163.00px;top:573.36px;width:8.00px;height:16.50px;background:#88d8e8;"></div>
<div style="left:171.00px;top:573.36px;width:3.00px;height:16.50px;background:#48e060;"></div>
<div style="left:176.00px;top:573.36px;width:1.00px;height:16.50px;background:#70ea90;"></div>
<div style="left:177.00px;top:573.36px;width:2.00px;height:16.50px;background:#70ea90;"></div>
<div style="left:179.00px;top:573.36px;width:1.00px;height:16.50px;background:#38d890;"></div>
<div style="left:180.00px;top:573.36px;width:1.00px;height:16.50px;background:#58d8e0;"></div>
<div style="left:181.00px;top:573.36px;width:24.00px;height:16.50px;background:#88e0b0;"></div>
<div style="left:205.00px;top:573.36px;width:10.00px;height:16.50px;background:#88e090;"></div>
<div style="left:215.00px;top:573.36px;width:1.00px;height:16.50px;background:#50e878;"></div>
<div style="left:216.00px;top:573.36px;width:3.00px;height:16.50px;background:#86dcd0;"></div>
<div style="left:219.00px;top:573.36px;width:3.00px;height:16.50px;background:#88dfc0;"></div>
<div style="left:222.00px;top:573.36px;width:1.00px;height:16.50px;background:#50e878;"></div>
<div style="left:223.00px;top:573.36px;width:1.00px;height:16.50px;background:#38d890;"></div>
<div style="left:224.00px;top:573.36px;width:2.00px;height:16.50px;background:#40e060;"></div>
<div style="left:226.00px;top:573.36px;width:1.00px;height:16.50px;background:#8fe99b;"></div>
<div style="left:227.00px;top:573.36px;width:2.00px;height:16.50px;background:#38d890;"></div>
<div style="left:229.00px;top:573.36px;width:2.00px;height:16.50px;background:#50e878;"></div>
<div style="left:231.00px;top:573.36px;width:3.00px;height:16.50px;background:#86dcd0;"></div>
<div style="left:234.00px;top:573.36px;width:3.00px;height:16.50px;background:#86dcd0;"></div>
<div class="blk" style="left:237px;top:573.36px;width:811px;height:16.5px;background:#00cc80"><div style="left:0;top:0;width:808px;height:16.5px;overflow:hidden"><span style="left:3px">0x7f819a747de7</span></div></div>
<div style="left:146.00px;top:591.04px;width:1.00px;height:16.50px;background:#70ea90;"></div>
<div style="left:147.00px;top:591.04px;width:1.00px;height:16.50px;background:#8fe99b;"></div>
<div style="left:148.00px;top:591.04px;width:2.00px;height:16.50px;background:#30dd48;"></div>
<div style="left:150.00px;top:591.04px;width:1.00px;height:16.50px;background:#88e090;"></div>
<div style="left:151.00px;top:591.04px;width:25.00px;height:16.50px;background:#88d8e8;"></div>
<div style="left:176.00px;top:591.04px;width:1.00px;height:16.50px;background:#58d8e0;"></div>
<div style="left:177.00px;top:591.04px;width:2.00px;height:16.50px;background:#80d8e4;"></div>
<div style="left:179.00px;top:591.04px;width:1.00px;height:16.50px;background:#30dd48;"></div>
<div style="left:180.00px;top:591.04px;width:2.00px;height:16.50px;background:#86dcd0;"></div>
<div style="left:182.00px;top:591.04px;width:23.00px;height:16.50px;background:#88ee90;"></div>
<div style="left:205.00px;top:591.04px;width:9.00px;height:16.50px;background:#88f0e0;"></div>
<div style="left:214.00px;top:591.04px;width:2.00px;height:16.50px;background:#50e878;"></div>
<div style="left:216.00px;top:591.04px;width:1.00px;height:16.50px;background:#8fe99b;"></div>
<div style="left:217.00px;top:591.04px;width:1.00px;height:16.50px;background:#50e878;"></div>
<div style="left:218.00px;top:591.04px;width:2.00px;height:16.50px;background:#38d890;"></div>
<div style="left:220.00px;top:591.04px;width:1.00px;height:16.50px;background:#8fe99b;"></div>
<div style="left:221.00px;top:591.04px;width:3.00px;height:16.50px;background:#88e090;"></div>
<div style="left:224.00px;top:591.04px;width:1.00px;height:16.50px;background:#38d890;"></div>
<div style="left:225.00px;top:591.04px;width:1.00px;height:16.50px;background:#40e060;"></div>
<div style="left:226.00px;top:591.04px;width:2.00px;height:16.50px;background:#88dfc0;"></div>
<div style="left:228.00px;top:591.04px;width:2.00px;height:16.50px;background:#8ff0e0;"></div>
<div style="left:230.00px;top:591.04px;width:2.00px;height:16.50px;background:#86dcd0;"></div>
<div style="left:232.00px;top:591.04px;width:2.00px;height:16.50px;background:#30dd48;"></div>
<div style="left:234.00px;top:591.04px;width:1.00px;height:16.50px;background:#70ea90;"></div>
<div style="left:235.00px;top:591.04px;width:2.00px;height:16.50px;background:#38d890;"></div>
<div class="blk" style="left:237px;top:591.04px;width:811px;height:16.5px;background:#00dc00"><div style="left:0;top:0;width:808px;height:16.5px;overflow:hidden"><span style="left:3px">start_thread</span></div></div>
<div style="left:146.00px;top:608.72px;width:67.00px;height:16.50px;background:#90e0a0;"></div>
<span class="m" style="left:149.00px;top:608.72px">main</span>
<div style="left:213.00px;top:608.72px;width:3.00px;height:16.50px;background:#88e090;"></div>
<div style="left:216.00px;top:608.72px;width:3.00px;height:16.50px;background:#98f0c8;"></div>
<div style="left:219.00px;top:608.72px;width:2.00px;height:16.50px;background:#30dd48;"></div>
<div style="left:221.00px;top:608.72px;width:2.00px;height:16.50px;background:#80e8d0;"></div>
<div style="left:223.00px;top:608.72px;width:1.00px;height:16.50px;background:#40e060;"></div>
<div style="left:224.00px;top:608.72px;width:2.00px;height:16.50px;background:#50e878;"></div>
<div style="left:226.00px;top:608.72px;width:1.00px;height:16.50px;background:#90eeb0;"></div>
<div style="left:227.00px;top:608.72px;width:3.00px;height:16.50px;background:#98f0c8;"></div>
<div style="left:230.00px;top:608.72px;width:1.00px;height:16.50px;background:#70ea90;"></div>
<div style="left:231.00px;top:608.72px;width:1.00px;height:16.50px;background:#50e878;"></div>
<div style="left:232.00px;top:608.72px;width:2.00px;height:16.50px;background:#30dd48;"></div>
<div style="left:234.00px;top:608.72px;width:1.00px;height:16.50px;background:#38d890;"></div>
<div style="left:235.00px;top:608.72px;width:1.00px;height:16.50px;background:#50e878;"></div>
<div style="left:236.00px;top:608.72px;width:1.00px;height:16.50px;background:#90eeb0;"></div>
<div class="blk" style="left:237px;top:608.72px;width:811px;height:16.5px;background:#00de18"><div style="left:0;top:0;width:808px;height:16.5px;overflow:hidden"><span style="left:3px">clone</span></div></div>
<div style="left:1039.00px;top:378.88px;width:2.00px;height:16.50px;background:#48e068;"></div>
<div style="left:1039.00px;top:396.56px;width:2.00px;height:16.50px;background:#48e068;"></div>
<div style="left:1039.00px;top:414.24px;width:2.00px;height:16.50px;background:#48e068;"></div>
<div style="left:1039.00px;top:431.92px;width:2.00px;height:16.50px;background:#48e068;"></div>
<div style="left:1048.00px;top:96.00px;width:4.00px;height:16.50px;background:#60e0a0;box-shadow:inset 1px 0 #48e060;"></div>
<div style="left:1052.00px;top:96.00px;width:6.00px;height:16.50px;background:#80e0e0;box-shadow:inset 1px 0 #40d870,inset -1px 0 #40d0c0;"></div>
<div style="left:1058.00px;top:96.00px;width:6.00px;height:16.50px;background:#8ee890;box-shadow:inset -1px 0 #40d870;"></div>
<div style="left:1048.00px;top:113.68px;width:4.00px;height:16.50px;background:#78e8c0;box-shadow:inset 1px 0 #40d870;"></div>
<div style="left:1052.00px;top:113.68px;width:6.00px;height:16.50px;background:#88f0e0;box-shadow:inset 1px 0 #48e060,inset -1px 0 #40d870;"></div>
<div style="left:1058.00px;top:113.68px;width:6.00px;height:16.50px;background:#88f0e0;box-shadow:inset -1px 0 #38d8a8;"></div>
<div style="left:1048.00px;top:131.36px;width:4.00px;height:16.50px;background:#70e888;box-shadow:inset 1px 0 #40d870;"></div>
<div style="left:1052.00px;top:131.36px;width:6.00px;height:16.50px;background:#88e8c0;box-shadow:inset 1px 0 #40d0c0,inset -1px 0 #40d0c0;"></div>
<div style="left:1058.00px;top:131.36px;width:6.00px;height:16.50px;background:#80d8e0;box-shadow:inset -1px 0 #40d0c0;"></div>
<div style="left:1048.00px;top:149.04px;width:4.00px;height:16.50px;background:#78e8c0;box-shadow:inset 1px 0 #40d870;"></div>
<div style="left:1052.00px;top:149.04px;width:6.00px;height:16.50px;background:#80e0e0;box-shadow:inset 1px 0 #40d0c0,inset -1px 0 #40d870;"></div>
<div style="left:1058.00px;top:149.04px;width:6.00px;height:16.50px;background:#88e8c0;box-shadow:inset -1px 0 #48e060;"></div>
<div style="left:1048.00px;top:166.72px;width:4.00px;height:16.50px;background:#60e0a0;box-shadow:inset 1px 0 #48e060;"></div>
<div style="left:1052.00px;top:166.72px;width:6.00px;height:16.50px;background:#88f0e0;box-shadow:inset 1px 0 #40d0c0,inset -1px 0 #38d8a8;"></div>
<div style="left:1058.00px;top:166.72px;width:6.00px;height:16.50px;background:#80d8e0;box-shadow:inset -1px 0 #38d8a8;"></div>
<div style="left:1048.00px;top:184.40px;width:4.00px;height:16.50px;background:#70e888;box-shadow:inset 1px 0 #48e060;"></div>
<div style="left:1052.00px;top:184.40px;width:6.00px;height:16.50px;background:#88e8c0;box-shadow:inset 1px 0 #38d8a8,inset -1px 0 #48e060;"></div>
<div style="left:1058.00px;top:184.40px;width:6.00px;height:16.50px;background:#78e0c8;box-shadow:inset -1px 0 #40d0c0;"></div>
<div style="left:1048.00px;top:202.08px;width:4.00px;height:16.50px;background:#60e0a0;box-shadow:inset 1px 0 #38d8a8;"></div>
<div style="left:1052.00px;top:202.08px;width:6.00px;height:16.50px;background:#88e8c0;box-shadow:inset 1px 0 #40d0c0,inset -1px 0 #40d870;"></div>
<div style="left:1058.00px;top:202.08px;width:6.00px;height:16.50px;background:#78e0c8;box-shadow:inset -1px 0 #40d870;"></div>
<div style="left:1048.00px;top:219.76px;width:4.00px;height:16.50px;background:#70e888;box-shadow:inset 1px 0 #38d8a8;"></div>
<div style="left:1052.00px;top:219.76px;width:6.00px;height:16.50px;background:#80e0e0;box-shadow:inset 1px 0 #48e060,inset -1px 0 #40d870;"></div>
<div style="left:1058.00px;top:219.76px;width:6.00px;height:16.50px;background:#88f0e0;box-shadow:inset -1px 0 #40d0c0;"></div>
<div style="left:1048.00px;top:237.44px;width:4.00px;height:16.50px;background:#60e0a0;box-shadow:inset 1px 0 #40d0c0;"></div>
<div style="left:1052.00px;top:237.44px;width:6.00px;height:16.50px;background:#88e8c0;box-shadow:inset 1px 0 #38d8a8,inset -1px 0 #38d8a8;"></div>
<div style="left:1058.00px;top:237.44px;width:6.00px;height:16.50px;background:#88f0e0;box-shadow:inset -1px 0 #40d0c0;"></div>
<div style="left:1048.00px;top:255.12px;width:4.00px;height:16.50px;background:#70e888;box-shadow:inset 1px 0 #48e060;"></div>
<div style="left:1052.00px;top:255.12px;width:6.00px;height:16.50px;background:#80e0e0;box-shadow:inset 1px 0 #40d870,inset -1px 0 #40d0c0;"></div>
<div style="left:1058.00px;top:255.12px;width:6.00px;height:16.50px;background:#80d8e0;box-shadow:inset -1px 0 #38d8a8;"></div>
<div style="left:1048.00px;top:272.80px;width:4.00px;height:16.50px;background:#78e8c0;box-shadow:inset 1px 0 #40d0c0;"></div>
<div style="left:1052.00px;top:272.80px;width:6.00px;height:16.50px;background:#80e0e0;box-shadow:inset 1px 0 #40d870,inset -1px 0 #48e060;"></div>
<div style="left:1058.00px;top:272.80px;width:6.00px;height:16.50px;background:#78e0c8;box-shadow:inset -1px 0 #40d870;"></div>
<div style="left:1048.00px;top:290.48px;width:4.00px;height:16.50px;background:#60e0a0;box-shadow:inset 1px 0 #38d8a8;"></div>
<div style="left:1052.00px;top:290.48px;width:6.00px;height:16.50px;background:#78e0c8;box-shadow:inset 1px 0 #40d870,inset -1px 0 #48e060;"></div>
<div style="left:1058.00px;top:290.48px;width:6.00px;height:16.50px;background:#78e0c8;box-shadow:inset -1px 0 #40d0c0;"></div>
<div style="left:1048.00px;top:308.16px;width:4.00px;height:16.50px;background:#70e888;box-shadow:inset 1px 0 #40d870;"></div>
<div style="left:1052.00px;top:308.16px;width:6.00px;height:16.50px;background:#8ee890;box-shadow:inset 1px 0 #40d870,inset -1px 0 #40d870;"></div>
<div style="left:1058.00px;top:308.16px;width:6.00px;height:16.50px;background:#88e8c0;box-shadow:inset -1px 0 #38d8a8;"></div>
<div style="left:1048.00px;top:325.84px;width:4.00px;height:16.50px;background:#60e0a0;box-shadow:inset 1px 0 #40d0c0;"></div>
<div style="left:1052.00px;top:325.84px;width:6.00px;height:16.50px;background:#80e0e0;box-shadow:inset 1px 0 #38d8a8,inset -1px 0 #40d870;"></div>
<div style="left:1058.00px;top:325.84px;width:6.00px;height:16.50px;background:#88e8c0;box-shadow:inset -1px 0 #48e060;"></div>
<div style="left:1048.00px;top:343.52px;width:4.00px;height:16.50px;background:#78e8c0;box-shadow:inset 1px 0 #48e060;"></div>
<div style="left:1052.00px;top:343.52px;width:6.00px;height:16.50px;background:#80e0e0;box-shadow:inset 1px 0 #40d0c0,inset -1px 0 #48e060;"></div>
<div style="left:1058.00px;top:343.52px;width:6.00px;height:16.50px;background:#78e0c8;box-shadow:inset -1px 0 #40d0c0;"></div>
<div style="left:1048.00px;top:361.20px;width:4.00px;height:16.50px;background:#70e888;box-shadow:inset 1px 0 #48e060;"></div>
<div style="left:1052.00px;top:361.20px;width:6.00px;height:16.50px;background:#8ee890;box-shadow:inset 1px 0 #38d8a8,inset -1px 0 #40d0c0;"></div>
<div style="left:1058.00px;top:361.20px;width:6.00px;height:16.50px;background:#88f0e0;box-shadow:inset -1px 0 #40d0c0;"></div>
<div style="left:1048.00px;top:378.88px;width:4.00px;height:16.50px;background:#60e0a0;box-shadow:inset 1px 0 #48e060;"></div>
<div style="left:1052.00px;top:378.88px;width:6.00px;height:16.50px;background:#80e0e0;box-shadow:inset 1px 0 #38d8a8,inset -1px 0 #48e060;"></div>
<div style="left:1058.00px;top:378.88px;width:6.00px;height:16.50px;background:#80d8e0;box-shadow:inset -1px 0 #48e060;"></div>
<div style="left:1048.00px;top:396.56px;width:4.00px;height:16.50px;background:#70e888;box-shadow:inset 1px 0 #38d8a8;"></div>
<div style="left:1052.00px;top:396.56px;width:6.00px;height:16.50px;background:#88f0e0;box-shadow:inset 1px 0 #40d0c0,inset -1px 0 #48e060;"></div>
<div style="left:1058.00px;top:396.56px;width:6.00px;height:16.50px;background:#88f0e0;box-shadow:inset -1px 0 #40d870;"></div>
<div style="left:1048.00px;top:414.24px;width:4.00px;height:16.50px;background:#60e0a0;box-shadow:inset 1px 0 #48e060;"></div>
<div style="left:1052.00px;top:414.24px;width:6.00px;height:16.50px;background:#88f0e0;box-shadow:inset 1px 0 #38d8a8,inset -1px 0 #40d870;"></div>
<div style="left:1058.00px;top:414.24px;width:6.00px;height:16.50px;background:#80d8e0;box-shadow:inset -1px 0 #48e060;"></div>
<div style="left:1048.00px;top:431.92px;width:4.00px;height:16.50px;background:#70e888;box-shadow:inset 1px 0 #40d0c0;"></div>
<div style="left:1052.00px;top:431.92px;width:6.00px;height:16.50px;background:#78e0c8;box-shadow:inset 1px 0 #38d8a8,inset -1px 0 #48e060;"></div>
<div style="left:1058.00px;top:431.92px;width:6.00px;height:16.50px;background:#88f0e0;box-shadow:inset -1px 0 #40d870;"></div>
<div style="left:1048.00px;top:449.60px;width:4.00px;height:16.50px;background:#78e8c0;box-shadow:inset 1px 0 #48e060;"></div>
<div style="left:1052.00px;top:449.60px;width:6.00px;height:16.50px;background:#78e0c8;box-shadow:inset 1px 0 #40d870,inset -1px 0 #48e060;"></div>
<div style="left:1058.00px;top:449.60px;width:6.00px;height:16.50px;background:#88e8c0;box-shadow:inset -1px 0 #48e060;"></div>
<div style="left:1048.00px;top:467.28px;width:4.00px;height:16.50px;background:#60e0a0;box-shadow:inset 1px 0 #40d0c0;"></div>
<div style="left:1052.00px;top:467.28px;width:6.00px;height:16.50px;background:#78e0c8;box-shadow:inset 1px 0 #40d870,inset -1px 0 #40d870;"></div>
<div style="left:1058.00px;top:467.28px;width:6.00px;height:16.50px;background:#78e0c8;box-shadow:inset -1px 0 #40d0c0;"></div>
<div style="left:1048.00px;top:484.96px;width:4.00px;height:16.50px;background:#78e8c0;box-shadow:inset 1px 0 #38d8a8;"></div>
<div style="left:1052.00px;top:484.96px;width:6.00px;height:16.50px;background:#78e0c8;box-shadow:inset 1px 0 #40d0c0,inset -1px 0 #40d870;"></div>
<div style="left:1058.00px;top:484.96px;width:6.00px;height:16.50px;background:#88f0e0;box-shadow:inset -1px 0 #38d8a8;"></div>
<div style="left:1048.00px;top:502.64px;width:4.00px;height:16.50px;background:#78e8c0;box-shadow:inset 1px 0 #38d8a8;"></div>
<div style="left:1052.00px;top:502.64px;width:6.00px;height:16.50px;background:#88e8c0;box-shadow:inset 1px 0 #40d0c0,inset -1px 0 #38d8a8;"></div>
<div style="left:1058.00px;top:502.64px;width:6.00px;height:16.50px;background:#88e8c0;box-shadow:inset -1px 0 #40d0c0;"></div>
<div style="left:1048.00px;top:520.32px;width:4.00px;height:16.50px;background:#78e8c0;box-shadow:inset 1px 0 #40d0c0;"></div>
<div style="left:1052.00px;top:520.32px;width:6.00px;height:16.50px;background:#8ee890;box-shadow:inset 1px 0 #40d0c0,inset -1px 0 #48e060;"></div>
<div style="left:1058.00px;top:520.32px;width:6.00px;height:16.50px;background:#88f0e0;box-shadow:inset -1px 0 #40d0c0;"></div>
<div style="left:1048.00px;top:538.00px;width:4.00px;height:16.50px;background:#70e888;box-shadow:inset 1px 0 #48e060;"></div>
<div style="left:1052.00px;top:538.00px;width:6.00px;height:16.50px;background:#8ee890;box-shadow:inset 1px 0 #40d0c0,inset -1px 0 #38d8a8;"></div>
<div style="left:1058.00px;top:538.00px;width:6.00px;height:16.50px;background:#88e8c0;box-shadow:inset -1px 0 #40d0c0;"></div>
<div style="left:1048.00px;top:555.68px;width:4.00px;height:16.50px;background:#70e888;box-shadow:inset 1px 0 #38d8a8;"></div>
<div style="left:1052.00px;top:555.68px;width:6.00px;height:16.50px;background:#78e0c8;box-shadow:inset 1px 0 #40d0c0,inset -1px 0 #40d870;"></div>
<div style="left:1058.00px;top:555.68px;width:6.00px;height:16.50px;background:#8ee890;box-shadow:inset -1px 0 #40d870;"></div>
<div style="left:1048.00px;top:573.36px;width:4.00px;height:16.50px;background:#70e888;box-shadow:inset 1px 0 #40d0c0;"></div>
<div style="left:1052.00px;top:573.36px;width:6.00px;height:16.50px;background:#8ee890;box-shadow:inset 1px 0 #40d870,inset -1px 0 #48e060;"></div>
<div style="left:1058.00px;top:573.36px;width:6.00px;height:16.50px;background:#78e0c8;box-shadow:inset -1px 0 #40d870;"></div>
<div style="left:1048.00px;top:591.04px;width:4.00px;height:16.50px;background:#70e888;box-shadow:inset 1px 0 #48e060;"></div>
<div style="left:1052.00px;top:591.04px;width:6.00px;height:16.50px;background:#80e0e0;box-shadow:inset 1px 0 #48e060,inset -1px 0 #40d870;"></div>
<div style="left:1058.00px;top:591.04px;width:6.00px;height:16.50px;background:#80d8e0;box-shadow:inset -1px 0 #40d0c0;"></div>
<div style="left:1048.00px;top:608.72px;width:4.00px;height:16.50px;background:#60e0a0;box-shadow:inset 1px 0 #48e060;"></div>
<div style="left:1052.00px;top:608.72px;width:6.00px;height:16.50px;background:#78e0c8;box-shadow:inset 1px 0 #40d0c0,inset -1px 0 #40d870;"></div>
<div style="left:1058.00px;top:608.72px;width:6.00px;height:16.50px;background:#88e8c0;box-shadow:inset -1px 0 #40d0c0;"></div>
<span class="m" style="left:149.5px;top:626.8px">3.2105e+6 allocations in total</span>
</div>

<svg class="a" style="left:0;top:0" width="1248" height="702" viewBox="0 0 1248 702">
  <!-- window icon -->
  <path d="M137.6 12 L137.6 20.2 L146 20.2 L146 12.3 L144.3 13.6 L142.3 13.2 L140.2 14.8 L138.6 12.8 Z" fill="#434a50"/>
  <path d="M137.6 12 L137.6 20.2 L146 20.2 L146 12.3 L144.3 13.6 L142.3 13.2 L140.2 14.8 L138.6 12.8 Z M139.6 14 V20 M141.6 14 V20 M143.6 13.4 V20" fill="none" stroke="#353a3f" stroke-width="0.9"/>
  <!-- title buttons -->
  <path d="M1062 14.5 L1065.8 18.2 L1069.6 14.5" fill="none" stroke="#f0f0f0" stroke-width="1.3"/>
  <path d="M1079.8 17.8 L1083.5 14 L1087.2 17.8" fill="none" stroke="#f0f0f0" stroke-width="1.3"/>
  <circle cx="1101.3" cy="16" r="6" fill="#fcfcfc"/>
  <path d="M1098.4 13.1 L1104.2 18.9 M1104.2 13.1 L1098.4 18.9" stroke="#4a5157" stroke-width="1.1"/>
  <!-- combo arrow -->
  <path d="M446.2 70.3 L449.6 73.7 L453 70.3" fill="none" stroke="#4d4f52" stroke-width="1.1"/>
  <!-- spin arrows -->
  <path d="M1088.2 70.2 L1091.7 66.8 L1095.2 70.2" fill="none" stroke="#55585b" stroke-width="1"/>
  <path d="M1088.2 74 L1091.7 77.4 L1095.2 74" fill="none" stroke="#55585b" stroke-width="1"/>
  <!-- scroll arrows -->
  <path d="M1092.6 103.6 L1096 100.2 L1099.4 103.6" fill="none" stroke="#55585b" stroke-width="1"/>
  <path d="M1092.6 637.4 L1096 640.6 L1099.4 637.4" fill="none" stroke="#a8aaac" stroke-width="1.1"/>
  <!-- scrollbar -->
  <rect x="1092.2" y="109.4" width="7.6" height="272" rx="3.8" fill="#c3c4c5"/>
  <rect x="1092.2" y="373.6" width="7.6" height="257" rx="3.8" fill="#7c7f83"/>
</svg>
</body></html>
